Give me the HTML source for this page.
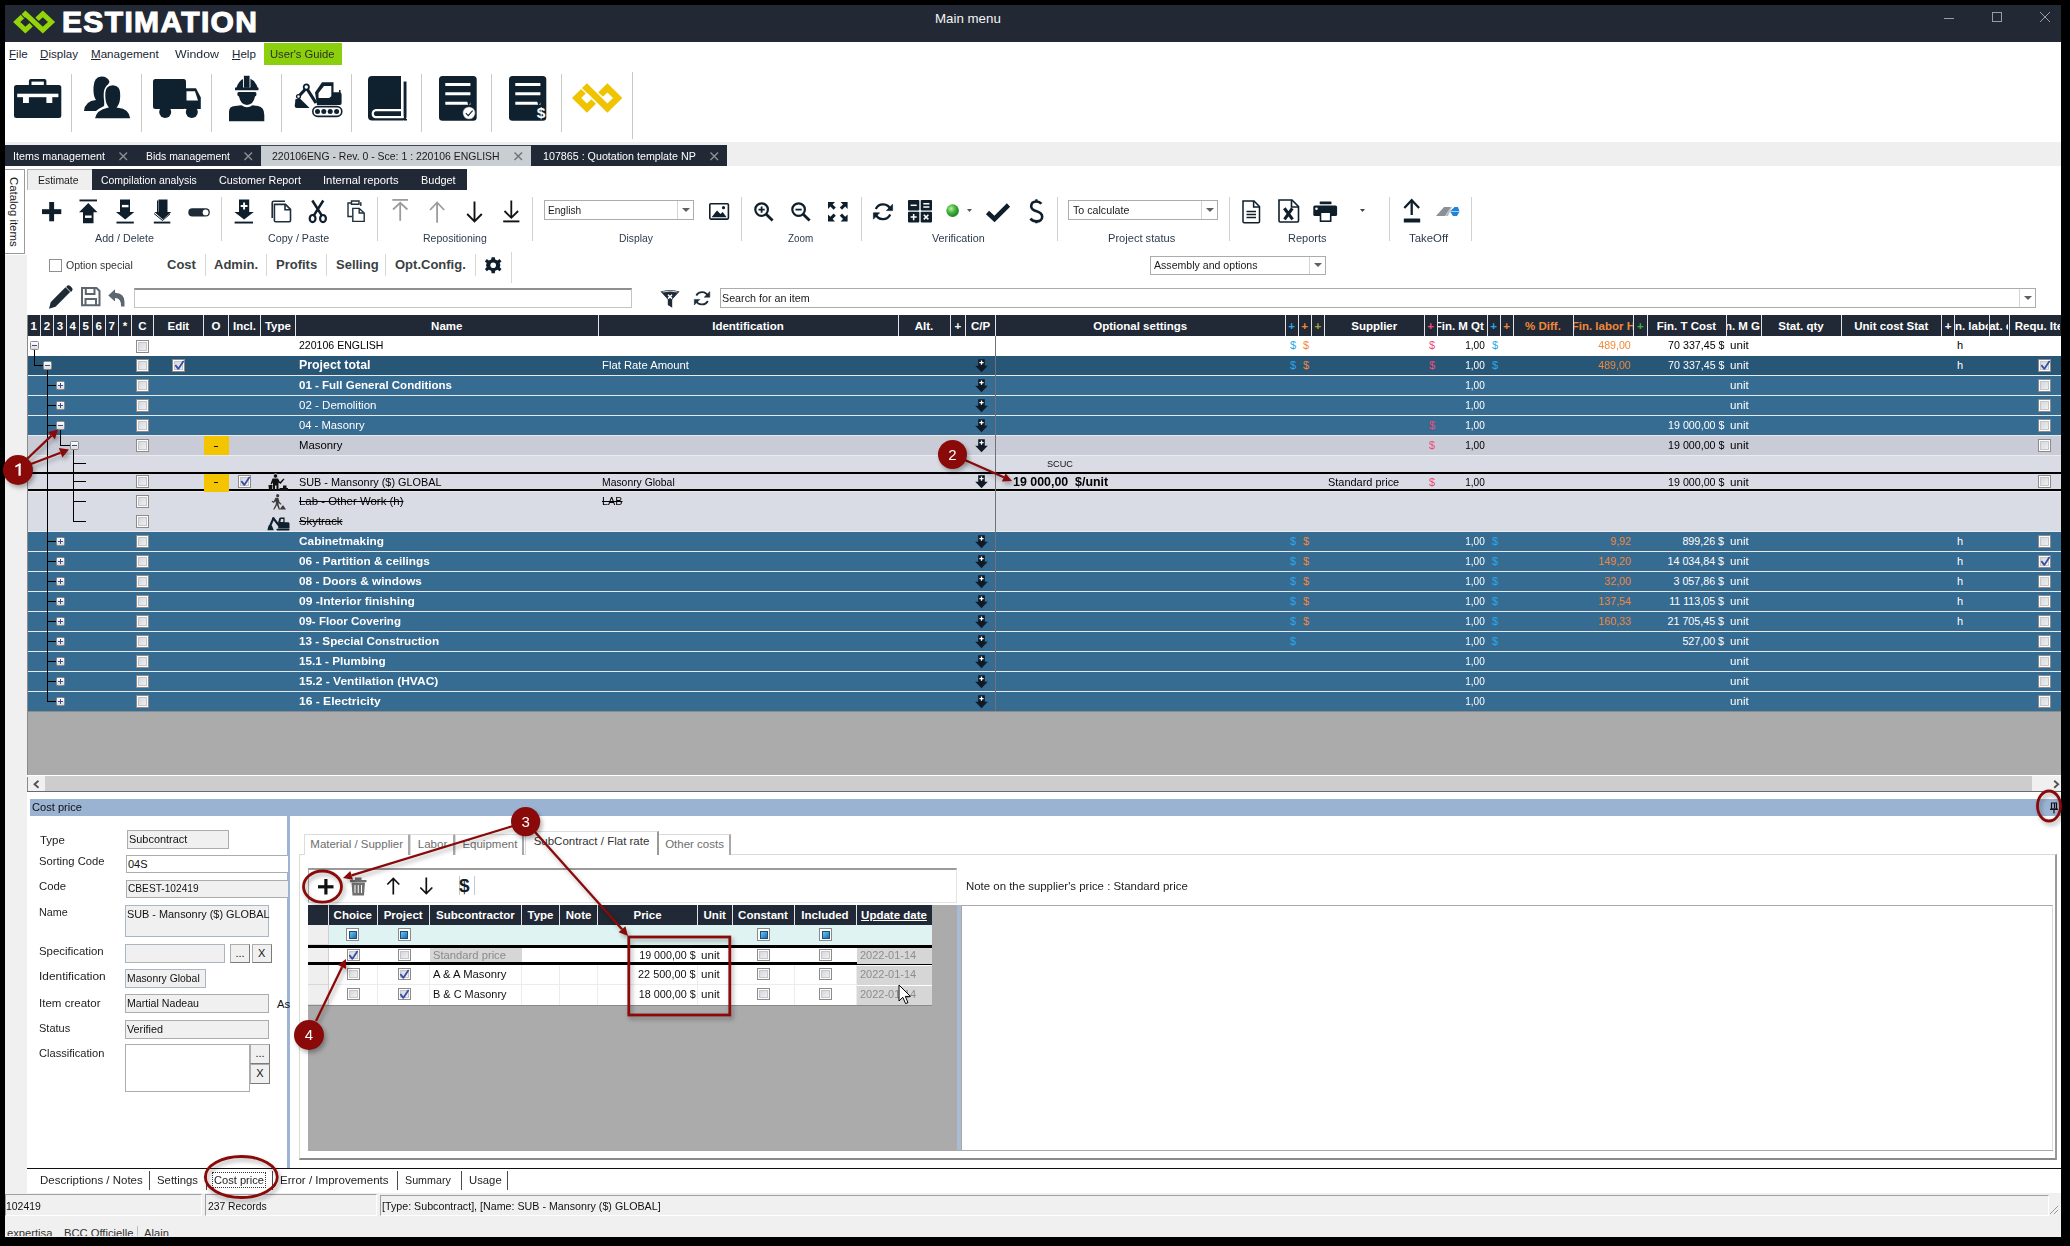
<!DOCTYPE html>
<html><head><meta charset="utf-8">
<style>
*{box-sizing:border-box;margin:0;padding:0}
html,body{width:2070px;height:1246px;overflow:hidden;background:#000;font-family:"Liberation Sans",sans-serif;}
.a{position:absolute}
.t{position:absolute;white-space:nowrap;font-size:10.7px;color:#000}
svg{position:absolute;overflow:visible}
.sep{position:absolute;width:1px;background:#c9c9c9}
.cb{position:absolute;width:13px;height:13px;border:1px solid #8e8a87;background:linear-gradient(135deg,#cdd1d8,#f6f6f6);box-shadow:inset 0 0 0 1px #fdfdfd,inset 0 0 0 2px #c3c6cb}
.ex{position:absolute;width:9px;height:9px;border:1px solid #8c8c8c;border-radius:1.5px;background:linear-gradient(#fdfdfd,#dcdcdc)}
</style></head><body>
<div class="a" style="left:5px;top:5px;width:2056px;height:1232px;background:#fff"></div>

<!-- TITLE BAR -->
<div class="a" style="left:5px;top:5px;width:2056px;height:37px;background:#222935"></div>
<svg style="left:0;top:0" width="70" height="42"><g fill="none" stroke="#94d40a" stroke-width="4.9" stroke-linejoin="miter" stroke-miterlimit="10"><polyline points="22.44,16.65 16.70,22.00 25.40,30.10 31.14,24.75"/><polyline points="23.22,15.93 25.40,13.90 42.80,30.10 51.50,22.00 42.80,13.90 37.06,19.25"/></g></svg>
<div class="t" style="left:62px;top:3px;font-size:30px;font-weight:bold;color:#fff;letter-spacing:1.35px;line-height:37px;-webkit-text-stroke:1.1px #fff">ESTIMATION</div>
<div class="t" style="left:935px;top:10.7px;font-size:13.3px;color:#f4f4f4;line-height:16px">Main menu</div>
<div class="a" style="left:1944px;top:18px;width:10px;height:1px;background:#9a9ea4"></div>
<div class="a" style="left:1992px;top:12px;width:10px;height:10px;border:1px solid #9a9ea4"></div>
<svg style="left:2040px;top:12px" width="11" height="11"><path d="M0,0L10,10M10,0L0,10" stroke="#9a9ea4" stroke-width="1"/></svg>

<!-- MENU BAR -->
<div class="a" style="left:264px;top:43px;width:78px;height:22px;background:#8ccf0c"></div>
<div class="t" style="left:9px;top:46px;font-size:11.6px;line-height:16px;color:#1b2633"><u>F</u>ile</div>
<div class="t" style="left:40px;top:46px;font-size:11.6px;line-height:16px;color:#1b2633"><u>D</u>isplay</div>
<div class="t" style="left:91px;top:46px;font-size:11.6px;line-height:16px;color:#1b2633"><u>M</u>anagement</div>
<div class="t" style="left:175px;top:46px;font-size:11.6px;line-height:16px;color:#1b2633;transform:scaleX(1.0665);transform-origin:left center">Window</div>
<div class="t" style="left:232px;top:46px;font-size:11.6px;line-height:16px;color:#1b2633"><u>H</u>elp</div>
<div class="t" style="left:270px;top:46px;font-size:11.6px;line-height:16px;color:#2b3320;transform:scaleX(0.9687);transform-origin:left center">User's Guide</div>

<!-- BIG TOOLBAR -->
<div class="sep" style="left:71px;top:74px;height:58px"></div>
<div class="sep" style="left:141px;top:74px;height:58px"></div>
<div class="sep" style="left:211px;top:74px;height:58px"></div>
<div class="sep" style="left:281px;top:74px;height:58px"></div>
<div class="sep" style="left:351px;top:74px;height:58px"></div>
<div class="sep" style="left:421px;top:74px;height:58px"></div>
<div class="sep" style="left:491px;top:74px;height:58px"></div>
<div class="sep" style="left:561px;top:74px;height:58px"></div>
<div class="sep" style="left:632px;top:72px;height:67px"></div>
<svg style="left:13.8px;top:79px" width="48" height="40" fill="#0f202e">
 <rect x="14.9" y="0" width="17.5" height="9" rx="2"/>
 <rect x="17.5" y="2.6" width="12.3" height="4" fill="#fff"/>
 <rect x="0" y="5.9" width="47.3" height="33" rx="2.5"/>
 <rect x="3.2" y="14.7" width="41.2" height="3.5" fill="#fff"/>
 <rect x="9" y="17.5" width="5.9" height="6.5" fill="#fff"/>
 <rect x="32.4" y="17.5" width="5.9" height="6.5" fill="#fff"/>
</svg>
<svg style="left:84px;top:76px" width="48" height="44" fill="#0f202e">
 <path d="M0,35 Q1,25 12,24 Q9,20 9.5,11 Q10,0.5 17.5,0.5 Q24,0.5 25.5,6 L22,12 L20,30 Q14,33 12,35 Z"/>
 <path d="M20.5,20 Q20,8.5 28.8,8.4 Q37.4,8.4 37,20 Q37,27 34,31 Q46,32 47.2,43 L10,43 Q12,33 23.5,31 Q20.5,27 20.5,20 Z" stroke="#fff" stroke-width="1.6"/>
</svg>
<svg style="left:153px;top:79px" width="48" height="40" fill="#0f202e">
 <rect x="0" y="0" width="33" height="30" rx="2.5"/>
 <path d="M32,9.2 H43 L47.8,18.5 V30 H32 Z"/>
 <path d="M33.5,12.3 H42 L45,21.4 H33.5 Z" fill="#fff"/>
 <circle cx="12.2" cy="33" r="6"/>
 <circle cx="38.8" cy="33" r="6"/>
</svg>
<svg style="left:229px;top:74.5px" width="36" height="47" fill="#0f202e">
 <path d="M7,14 Q9,6 15,3.5 L21,3.5 Q27,6 29,14 Z"/>
 <rect x="14.5" y="0.3" width="6.5" height="13" rx="1.2" stroke="#fff" stroke-width="0.9"/>
 <rect x="6" y="12.6" width="23.5" height="2.6" rx="0.5"/>
 <path d="M9.5,17 H26 Q27.5,17 27.5,19 Q27.5,21 26,21.5 Q24.5,29.5 18,30 Q11.5,29.5 10,21.5 Q8.3,21 8.3,19 Q8.3,17 9.5,17 Z"/>
 <path d="M0,46.3 V37 Q0,31 6,31 L12.5,30.3 Q18,34 23.5,30.3 L29,31 Q35.3,32 35.3,40 V46.3 Z"/>
</svg>
<svg style="left:293.5px;top:82px" width="48" height="35" fill="#0f202e">
 <rect x="18.8" y="24.6" width="29" height="9.8" rx="4.9" fill="none" stroke="#0f202e" stroke-width="1.6"/>
 <circle cx="23.5" cy="29.5" r="2.5"/><circle cx="29.8" cy="29.5" r="2.5"/><circle cx="36.2" cy="29.5" r="2.5"/><circle cx="42.6" cy="29.5" r="2.5"/>
 <path d="M21,10.5 L28,0.3 H39.5 V10.3 H46 Q47.6,10.5 47.6,12.5 V21 Q47.6,22.9 46,22.9 H23 Z"/>
 <path d="M24.5,11 L30,4 H37.3 V14.2 L35.2,16 H24.5 Z" fill="#fff"/>
 <rect x="45" y="8" width="1.5" height="3"/>
 <path d="M22,21 L12.5,6 L5,14" fill="none" stroke="#0f202e" stroke-width="3.2"/>
 <circle cx="12.3" cy="5" r="2.6" fill="#fff" stroke="#0f202e" stroke-width="1.8"/>
 <circle cx="4.5" cy="14.5" r="1.9" fill="#fff" stroke="#0f202e" stroke-width="1.4"/>
 <path d="M1.5,17 H6.5 L15.6,26 H3 Q0.7,26 0.7,24 Z"/>
</svg>
<svg style="left:367.7px;top:76px" width="39" height="45" fill="#0f202e">
 <rect x="0" y="0" width="38.5" height="44.4" rx="4"/>
 <rect x="33" y="-1" width="6" height="6.5" fill="#fff"/>
 <rect x="33" y="0" width="2.6" height="42" fill="#fff"/>
 <rect x="36" y="43" width="3" height="1.5"/>
 <path d="M33,34.2 H7.5 A3.6,3.6 0 0 0 7.5,41.2 H35.6" stroke="#fff" stroke-width="2.2" fill="none"/>
</svg>
<svg style="left:438.7px;top:76px" width="38" height="45" fill="#0f202e">
 <rect x="0" y="0" width="37.7" height="44.7" rx="3.5"/>
 <g stroke="#fff" stroke-width="2.9"><path d="M6.3,8.5H31.4M6.3,17.7H31.4M6.3,27.3H31.4"/></g>
 <path d="M28,25 L32.5,25 L29.5,30 Z"/>
 <circle cx="30" cy="37" r="6.3" fill="#fff" stroke="#0f202e" stroke-width="0.6"/>
 <path d="M26.8,37.2 L29.2,39.6 L33.6,34.6" stroke="#0f202e" stroke-width="1.1" fill="none"/>
</svg>
<svg style="left:508.8px;top:76px" width="38" height="45" fill="#0f202e">
 <rect x="0" y="0" width="37.3" height="44.7" rx="3.5"/>
 <g stroke="#fff" stroke-width="2.9"><path d="M6.3,8.5H31.4M6.3,17.7H31.4M6.3,27.3H31.4"/></g>
 <path d="M28,25 L32.5,25 L29.5,30 Z"/>
 <text x="27.8" y="41.5" font-family="Liberation Sans" font-weight="bold" font-size="15.5" fill="#fff">$</text>
</svg>
<svg style="left:572px;top:82.5px" width="50" height="31"><g fill="none" stroke="#f0c300" stroke-width="6.6" stroke-linejoin="miter" stroke-miterlimit="10"><polyline points="11.42,8.27 4.65,15.00 14.90,25.20 21.66,18.47"/><polyline points="12.34,7.35 14.90,4.80 35.40,25.20 45.65,15.00 35.40,4.80 28.63,11.53"/></g></svg>


<!-- DOC TABS -->
<div class="a" style="left:5px;top:142px;width:2056px;height:24px;background:#efefef"></div>
<div class="a" style="left:5px;top:145px;width:256px;height:21px;background:#212936"></div>
<div class="a" style="left:261px;top:145px;width:270px;height:21px;background:#c9ced3;border-top:1px solid #3c4654"></div>
<div class="a" style="left:531px;top:145px;width:196px;height:21px;background:#212936"></div>
<div class="t" style="left:13px;top:149px;line-height:14px;color:#fff;transform:scaleX(1.0045);transform-origin:left center">Items management</div>
<div class="t" style="left:146px;top:149px;line-height:14px;color:#fff;transform:scaleX(0.9740);transform-origin:left center">Bids management</div>
<div class="t" style="left:272px;top:149px;line-height:14px;font-size:10.55px;color:#1a1a1a;transform:scaleX(0.9914);transform-origin:left center">220106ENG - Rev. 0 - Sce: 1 : 220106 ENGLISH</div>
<div class="t" style="left:543px;top:149px;line-height:14px;color:#fff;transform:scaleX(1.0008);transform-origin:left center">107865 : Quotation template NP</div>
<svg style="left:119px;top:152px" width="9" height="9"><path d="M0.5,0.5L8,8M8,0.5L0.5,8" stroke="#8d9197" stroke-width="1.4"/></svg>
<svg style="left:244px;top:152px" width="9" height="9"><path d="M0.5,0.5L8,8M8,0.5L0.5,8" stroke="#8d9197" stroke-width="1.4"/></svg>
<svg style="left:514px;top:152px" width="9" height="9"><path d="M0.5,0.5L8,8M8,0.5L0.5,8" stroke="#6d7177" stroke-width="1.4"/></svg>
<svg style="left:710px;top:152px" width="9" height="9"><path d="M0.5,0.5L8,8M8,0.5L0.5,8" stroke="#8d9197" stroke-width="1.4"/></svg>

<!-- LEFT STRIP + ESTIMATE TABS -->
<div class="a" style="left:5px;top:255px;width:22px;height:940px;background:#f0f0f0"></div>
<div class="a" style="left:5px;top:169px;width:20px;height:85px;background:#fff;border:1px solid #9a9a9a;border-left:none"></div>
<div class="t" style="left:7px;top:176.5px;line-height:14px;font-size:11.4px;writing-mode:vertical-rl;color:#1a1a1a">Catalog items</div>
<div class="a" style="left:27px;top:169px;width:65px;height:21px;background:#efefef;border-top:1px solid #b4b4b4;border-left:1px solid #b4b4b4"></div>
<div class="a" style="left:92px;top:169px;width:375px;height:21px;background:#212936"></div>
<div class="t" style="left:38px;top:173px;line-height:14px;color:#1a1a1a;transform:scaleX(0.9754);transform-origin:left center">Estimate</div>
<div class="t" style="left:101px;top:173px;line-height:14px;color:#fff;transform:scaleX(0.9762);transform-origin:left center">Compilation analysis</div>
<div class="t" style="left:219px;top:173px;line-height:14px;color:#fff;transform:scaleX(1.0065);transform-origin:left center">Customer Report</div>
<div class="t" style="left:323px;top:173px;line-height:14px;color:#fff;transform:scaleX(1.0519);transform-origin:left center">Internal reports</div>
<div class="t" style="left:421px;top:173px;line-height:14px;color:#fff;transform:scaleX(1.0232);transform-origin:left center">Budget</div>
<!-- ESTIMATE TOOLBAR -->
<svg style="left:41.5px;top:201.5px" width="20" height="20" fill="#0f1e2b"><rect x="7.2" y="0" width="4.9" height="19.3"/><rect x="0" y="7.2" width="19.3" height="4.9"/></svg>
<svg style="left:79px;top:198.5px" width="19" height="25" fill="#0f1e2b"><rect x="0.5" y="0.5" width="17.5" height="1.9"/><path d="M9.25,4 L18.5,13.2 H14.5 V24.3 H4 V13.2 H0 Z"/><rect x="6" y="16.5" width="6.6" height="2.4" fill="#fff"/></svg>
<svg style="left:115.5px;top:198.5px" width="19" height="25" fill="#0f1e2b"><path d="M4,0.5 H14 V13 H18.3 L9.2,20.5 L0,13 H4 Z"/><rect x="0.5" y="22.6" width="17.3" height="1.9"/><rect x="5.9" y="5.9" width="6.6" height="2.4" fill="#fff"/></svg>
<svg style="left:152.5px;top:198.5px" width="19" height="25" fill="#0f1e2b"><path d="M5.5,0.5 H14.5 V13 H18.3 L9.8,20.5 L1.5,13 H5.5 Z"/><path d="M1,14.5 L9.5,21.5 L17,15" fill="none" stroke="#0f1e2b" stroke-width="1"/><rect x="4" y="1.5" width="1.2" height="12"/><rect x="0.8" y="22.6" width="16.5" height="1.9"/></svg>
<svg style="left:188px;top:207.5px" width="23" height="10"><rect x="0.3" y="0.3" width="21.5" height="8.2" rx="4.1" fill="#1e2a36"/><circle cx="17.6" cy="4.4" r="2.9" fill="#fff"/></svg>
<div class="sep" style="left:221px;top:197px;height:44px;background:#d0d0d0"></div>
<svg style="left:234px;top:198.5px" width="21" height="25" fill="#0f1e2b"><path d="M5,0.5 H15.2 V13 H19.8 L10.1,20.5 L0.4,13 H5 Z"/><rect x="0.6" y="22.6" width="18.4" height="1.9"/><path d="M10.1,3.6V10.4M6.7,7H13.5" stroke="#fff" stroke-width="1.9"/></svg>
<svg style="left:271px;top:200px" width="21" height="23" fill="none" stroke="#1e2e3a" stroke-width="1.6"><path d="M14,1.2 H2.8 Q1.2,1.2 1.2,2.8 V18"/><path d="M3.4,4.4 H14.5 L19.5,9.4 V20.6 Q19.5,21.8 18.3,21.8 H4.6 Q3.4,21.8 3.4,20.6 Z"/><path d="M14,4.6 V9.8 H19.3"/></svg>
<svg style="left:308px;top:200px" width="21" height="23" fill="none" stroke="#0f1e2b"><path d="M4.3,0.5 L14.2,16.2 M15.3,0.5 L5.4,16.2" stroke-width="2.5"/><ellipse cx="4.6" cy="18.6" rx="2.9" ry="3.6" stroke-width="2.2"/><ellipse cx="15" cy="18.6" rx="2.9" ry="3.6" stroke-width="2.2"/></svg>
<svg style="left:346.5px;top:200px" width="19" height="23" fill="none" stroke="#1e2e3a" stroke-width="1.4"><path d="M4,3 H1 V16.5 H5"/><path d="M4.5,1 H12 V4.2 H4.5 Z"/><path d="M13,3 H13.8 V6"/><path d="M5.8,8.4 H12.2 L17.2,13 V21.4 H5.8 Z"/><path d="M12.2,8.4 V13 H17"/></svg>
<div class="sep" style="left:377px;top:197px;height:44px;background:#d0d0d0"></div>
<svg style="left:391.5px;top:199px" width="17" height="23" fill="none" stroke="#9c9c9c" stroke-width="1.8"><path d="M0.3,0.9 H16"/><path d="M8.2,4 V21.8 M1,10.5 L8.2,3.8 L15.4,10.5"/></svg>
<svg style="left:429px;top:200.5px" width="17" height="23" fill="none" stroke="#9c9c9c" stroke-width="1.8"><path d="M8.1,1.5 V21.7 M1,9 L8.1,1.5 L15.2,9"/></svg>
<svg style="left:465.5px;top:200.5px" width="17" height="23" fill="none" stroke="#121212" stroke-width="1.9"><path d="M8.5,0.5 V20.8 M1.2,13 L8.5,20.5 L15.8,13"/></svg>
<svg style="left:502.5px;top:200px" width="17" height="23" fill="none" stroke="#121212" stroke-width="1.8"><path d="M8.3,0.5 V17.5 M1.5,11 L8.3,17.8 L15.1,11"/><path d="M0.2,21.4 H16.4" stroke-width="1.9"/></svg>
<div class="sep" style="left:532px;top:197px;height:44px;background:#d0d0d0"></div>
<!-- english dropdown -->
<div class="a" style="left:544px;top:200px;width:150px;height:20px;border:1px solid #acacac;background:#fff"></div>
<div class="a" style="left:677px;top:201px;width:1px;height:18px;background:#d4d4d4"></div>
<svg style="left:681.5px;top:207.5px" width="9" height="5"><path d="M0,0H8L4,4Z" fill="#606060"/></svg>
<div class="t" style="left:548px;top:203px;line-height:14px;color:#1a1a1a;transform:scaleX(0.9431);transform-origin:left center">English</div>
<svg style="left:708.5px;top:203px" width="21" height="17"><rect x="0.8" y="0.8" width="18.6" height="15.3" rx="1" fill="none" stroke="#0f1e2b" stroke-width="1.6"/><path d="M2.6,14.3 L8,7.5 L11.5,11 L13.7,9 L17.6,14.3 Z" fill="#0f1e2b"/><circle cx="14.5" cy="4.7" r="1.6" fill="#0f1e2b"/></svg>
<div class="sep" style="left:741px;top:197px;height:44px;background:#d0d0d0"></div>
<svg style="left:754px;top:202px" width="21" height="20" fill="none" stroke="#0f1e2b"><circle cx="7.6" cy="7.6" r="6.3" stroke-width="2.2"/><path d="M12.2,12.2 L18.6,18.6" stroke-width="2.8"/><path d="M7.6,4.5V10.7M4.5,7.6H10.7" stroke-width="1.8"/></svg>
<svg style="left:791px;top:202px" width="21" height="20" fill="none" stroke="#0f1e2b"><circle cx="7.6" cy="7.6" r="6.3" stroke-width="2.2"/><path d="M12.2,12.2 L18.6,18.6" stroke-width="2.8"/><path d="M4.5,7.6H10.7" stroke-width="1.8"/></svg>
<svg style="left:828px;top:202px" width="20" height="20" fill="#0f1e2b"><path d="M0,0H7L4.6,2.4L7.8,5.6L5.6,7.8L2.4,4.6L0,7Z"/><path d="M19.6,0H12.6L15,2.4L11.8,5.6L14,7.8L17.2,4.6L19.6,7Z"/><path d="M0,19.4H7L4.6,17L7.8,13.8L5.6,11.6L2.4,14.8L0,12.4Z"/><path d="M19.6,19.4H12.6L15,17L11.8,13.8L14,11.6L17.2,14.8L19.6,12.4Z"/></svg>
<div class="sep" style="left:860.5px;top:197px;height:44px;background:#d0d0d0"></div>
<svg style="left:873px;top:202px" width="21" height="20" fill="none" stroke="#0f1e2b" stroke-width="2.3"><path d="M17.5,7.5 A8,8 0 0 0 2.8,7"/><path d="M2.5,12 A8,8 0 0 0 17.2,12.5"/><path d="M19.6,2.2 V8.6 H13.4 Z" fill="#0f1e2b" stroke-width="0.6"/><path d="M0.4,17.2 V10.8 H6.6 Z" fill="#0f1e2b" stroke-width="0.6"/></svg>
<svg style="left:907.5px;top:200px" width="25" height="23" fill="#0f1e2b"><rect x="0" y="0" width="11.3" height="10.6" rx="0.8"/><rect x="12.7" y="0" width="11.3" height="10.6" rx="0.8"/><rect x="0" y="11.8" width="11.3" height="10.6" rx="0.8"/><rect x="12.7" y="11.8" width="11.3" height="10.6" rx="0.8"/><g stroke="#fff" stroke-width="1.5"><path d="M2.6,5.3H8.7"/><path d="M15.3,3.7H21.4M15.3,6.9H21.4"/><path d="M5.65,14V20.2M2.6,17.1H8.7"/><path d="M15.8,14.8L20.4,19.4M20.4,14.8L15.8,19.4"/></g></svg>
<svg style="left:946px;top:203.5px" width="15" height="15"><defs><radialGradient id="gd" cx="0.38" cy="0.35" r="0.7"><stop offset="0" stop-color="#b9f0a0"/><stop offset="0.5" stop-color="#3fb23a"/><stop offset="1" stop-color="#1f7a22"/></radialGradient></defs><circle cx="6.6" cy="6.6" r="6.3" fill="url(#gd)"/></svg>
<svg style="left:967px;top:209px" width="6" height="4"><path d="M0,0H5L2.5,3Z" fill="#555"/></svg>
<svg style="left:985.5px;top:202px" width="25" height="20"><path d="M1.5,10.5 L8.5,17 L22.5,3" fill="none" stroke="#0f1e2b" stroke-width="4.6"/></svg>
<svg style="left:1029px;top:198.5px" width="16" height="25" fill="none" stroke="#0f1e2b" stroke-width="2.6"><path d="M12.4,4.8 C11.2,3.3 9.4,2.5 7.4,2.5 C4.2,2.5 2.2,4.4 2.2,7.2 C2.2,10.4 5,11.5 7.6,12.3 C10.6,13.2 13.2,14.6 13.2,17.8 C13.2,20.6 10.8,22.4 7.6,22.4 C5.2,22.4 3,21.4 1.4,19.6"/><path d="M7.4,0.3V2.6M7.4,22.3V24.3" stroke-width="2.3"/></svg>
<div class="sep" style="left:1057px;top:197px;height:44px;background:#d0d0d0"></div>
<!-- to calculate -->
<div class="a" style="left:1068px;top:200px;width:150px;height:20px;border:1px solid #acacac;background:#fff"></div>
<div class="a" style="left:1201px;top:201px;width:1px;height:18px;background:#d4d4d4"></div>
<svg style="left:1205.5px;top:207.5px" width="9" height="5"><path d="M0,0H8L4,4Z" fill="#606060"/></svg>
<div class="t" style="left:1073px;top:203px;line-height:14px;color:#1a1a1a;transform:scaleX(0.9981);transform-origin:left center">To calculate</div>
<div class="sep" style="left:1228.5px;top:197px;height:44px;background:#d0d0d0"></div>
<svg style="left:1242px;top:199.5px" width="19" height="24" fill="none" stroke="#0f1e2b" stroke-width="1.5"><path d="M1,1 H12 L17.5,6.5 V21.5 Q17.5,22.8 16.2,22.8 H2.3 Q1,22.8 1,21.5 Z"/><path d="M11.6,1.2 V7 H17.3"/><path d="M4.5,11.5H14M4.5,14.5H14M4.5,17.5H14" stroke-width="1.3"/></svg>
<svg style="left:1277.5px;top:199px" width="22" height="24" fill="none" stroke="#0f1e2b" stroke-width="1.6"><path d="M1,1 H14 L20.5,7.5 V21.8 Q20.5,23 19.3,23 H2.2 Q1,23 1,21.8 Z"/><path d="M13.5,1.2 V8 H20.3"/><path d="M6.3,9.3 L14.6,20.4 M14.3,9.3 L6.5,20.4" stroke-width="3.1"/></svg>
<svg style="left:1312.5px;top:200.5px" width="26" height="22" fill="#0f1e2b"><rect x="6.7" y="0.4" width="11.8" height="2.8" rx="0.6"/><rect x="0.3" y="4.5" width="23.8" height="10.6" rx="1.6"/><circle cx="3.5" cy="7.7" r="1.3" fill="#fff"/><rect x="6.7" y="10.8" width="11.8" height="10.2" rx="0.6"/><rect x="8.3" y="12" width="8.6" height="7.4" fill="#fff"/></svg>
<svg style="left:1360px;top:209px" width="6" height="4"><path d="M0,0H5L2.5,3Z" fill="#444"/></svg>
<div class="sep" style="left:1388.5px;top:197px;height:44px;background:#d0d0d0"></div>
<svg style="left:1402.5px;top:199px" width="19" height="24" fill="#0f1e2b"><path d="M8.7,1V16" stroke="#0f1e2b" stroke-width="2.3"/><path d="M1.3,9 L8.7,1.2 L16.1,9" fill="none" stroke="#0f1e2b" stroke-width="2.3"/><rect x="0.8" y="19.6" width="16.4" height="3.8" rx="0.5"/></svg>
<svg style="left:1436px;top:205px" width="24" height="12"><path d="M0,11 L8,2 H15 L9,11 Z" fill="#8a9096"/><path d="M9,11 L15,2 H16 L12,11Z" fill="#b8bcc0"/><path d="M14,6.5 L18.5,2 H22 L23.5,6.5 L21,11 H17 Z" fill="#1f84d8"/><path d="M14,6.5 H23.5" stroke="#fff" stroke-width="0.6"/></svg>
<div class="sep" style="left:1470.5px;top:197px;height:44px;background:#d0d0d0"></div>
<!-- group labels -->
<div class="t" style="left:95px;top:231px;line-height:14px;color:#2c3b4c;transform:scaleX(1.0019);transform-origin:left center">Add / Delete</div>
<div class="t" style="left:268px;top:231px;line-height:14px;color:#2c3b4c;transform:scaleX(0.9990);transform-origin:left center">Copy / Paste</div>
<div class="t" style="left:422.5px;top:231px;line-height:14px;color:#2c3b4c;transform:scaleX(0.9855);transform-origin:left center">Repositioning</div>
<div class="t" style="left:619px;top:231px;line-height:14px;color:#2c3b4c;transform:scaleX(0.9662);transform-origin:left center">Display</div>
<div class="t" style="left:788px;top:231px;line-height:14px;color:#2c3b4c;transform:scaleX(0.9250);transform-origin:left center">Zoom</div>
<div class="t" style="left:932px;top:231px;line-height:14px;color:#2c3b4c;transform:scaleX(1.0068);transform-origin:left center">Verification</div>
<div class="t" style="left:1108px;top:231px;line-height:14px;color:#2c3b4c;transform:scaleX(1.0382);transform-origin:left center">Project status</div>
<div class="t" style="left:1288px;top:231px;line-height:14px;color:#2c3b4c;transform:scaleX(1.0302);transform-origin:left center">Reports</div>
<div class="t" style="left:1408.5px;top:231px;line-height:14px;color:#2c3b4c;transform:scaleX(1.0661);transform-origin:left center">TakeOff</div>
<!-- option row -->
<div class="a" style="left:49px;top:258.5px;width:13px;height:13px;border:1px solid #8f8f8f;background:#fff"></div>
<div class="t" style="left:65.5px;top:258px;line-height:14px;color:#333;transform:scaleX(0.9852);transform-origin:left center">Option special</div>
<div class="t" style="left:167px;top:257px;font-size:13px;font-weight:bold;line-height:16px;color:#3a3f44">Cost</div>
<div class="t" style="left:214px;top:257px;font-size:13px;font-weight:bold;line-height:16px;color:#3a3f44">Admin.</div>
<div class="t" style="left:276px;top:257px;font-size:13px;font-weight:bold;line-height:16px;color:#3a3f44">Profits</div>
<div class="t" style="left:336px;top:257px;font-size:13px;font-weight:bold;line-height:16px;color:#3a3f44">Selling</div>
<div class="t" style="left:395px;top:257px;font-size:13px;font-weight:bold;line-height:16px;color:#3a3f44">Opt.Config.</div>
<div class="sep" style="left:204.5px;top:254px;height:22px;background:#d6d6d6"></div>
<div class="sep" style="left:266px;top:254px;height:22px;background:#d6d6d6"></div>
<div class="sep" style="left:326px;top:254px;height:22px;background:#d6d6d6"></div>
<div class="sep" style="left:385px;top:254px;height:22px;background:#d6d6d6"></div>
<div class="sep" style="left:475px;top:254px;height:22px;background:#d6d6d6"></div>
<div class="sep" style="left:511px;top:252px;height:31px;background:#d6d6d6"></div>
<svg style="left:484.5px;top:256.5px" width="17" height="17"><g transform="translate(8.2,8.2)" fill="#0f1e2b"><path d="M-1.6,-8 H1.6 L2,-5.6 L4.4,-4.6 L6.4,-6.1 L8.3,-3.8 L6.5,-2.1 L7.2,0 L6.5,2.1 L8.3,3.8 L6.4,6.1 L4.4,4.6 L2,5.6 L1.6,8 H-1.6 L-2,5.6 L-4.4,4.6 L-6.4,6.1 L-8.3,3.8 L-6.5,2.1 L-7.2,0 L-6.5,-2.1 L-8.3,-3.8 L-6.4,-6.1 L-4.4,-4.6 L-2,-5.6 Z"/><circle r="2.8" fill="#fff"/></g></svg>
<div class="a" style="left:1150px;top:255.5px;width:176px;height:19.5px;border:1px solid #acacac;background:#fff"></div>
<div class="a" style="left:1309px;top:256.5px;width:1px;height:17.5px;background:#d4d4d4"></div>
<svg style="left:1313.5px;top:262.5px" width="9" height="5"><path d="M0,0H8L4,4Z" fill="#606060"/></svg>
<div class="t" style="left:1154px;top:258px;line-height:14px;color:#1a1a1a;transform:scaleX(0.9897);transform-origin:left center">Assembly and options</div>
<!-- pencil row -->
<svg style="left:49px;top:285px" width="25" height="24" fill="#1e2a36"><path d="M0,23.7 L1.8,17 L16.5,2.3 L21.2,7 L6.5,21.7 Z"/><path d="M17.8,1 Q19.5,-0.6 21.2,1 L22.9,2.7 Q24.5,4.3 22.9,6 L22,6.9 L17.3,2.2 Z"/></svg>
<svg style="left:80.5px;top:287px" width="20" height="20" fill="none" stroke="#5c6670" stroke-width="2"><path d="M1,1 H15.5 L18.5,4 V18.3 H1 Z"/><path d="M4.8,1.5 V7 H13.5 V1.5"/><path d="M4.5,18 V12 H15 V18"/></svg>
<svg style="left:108px;top:289px" width="17" height="18" fill="#5c6670"><path d="M0.3,6.5 L7,0.3 V3.8 Q16.5,4 16.5,13 V17.5 H13 Q13.5,9.2 7,9 V12.6 Z"/></svg>
<div class="a" style="left:134px;top:288px;width:498px;height:20px;border:1px solid #c4c4c4;border-top:2px solid #8f8f8f;background:#fff"></div>
<svg style="left:660px;top:289px" width="21" height="20" fill="#1e2a36"><path d="M0.5,2.5 Q10,-0.5 19.5,2.5 L12.2,10.5 V18.8 L7.8,16 V10.5 Z"/><path d="M2.6,3 Q10,1.2 17.4,3" stroke="#fff" stroke-width="0.8" fill="none"/><path d="M8,5.8 L12,9.6 M12,5.8 L8,9.6" stroke="#fff" stroke-width="1.5"/></svg>
<svg style="left:693.5px;top:290px" width="17" height="17" fill="none" stroke="#1e2a36" stroke-width="1.8"><path d="M14,6 A6.6,6.6 0 0 0 2.3,5.5"/><path d="M2,10.6 A6.6,6.6 0 0 0 13.8,11"/><path d="M15.8,1.6V7.2H10.2Z" fill="#1e2a36" stroke-width="0.5"/><path d="M0.3,15V9.4H5.9Z" fill="#1e2a36" stroke-width="0.5"/></svg>
<div class="a" style="left:720px;top:288px;width:1316px;height:20px;border:1px solid #acacac;background:#fff"></div>
<div class="a" style="left:2019px;top:289px;width:1px;height:18px;background:#d4d4d4"></div>
<svg style="left:2023.5px;top:295.5px" width="9" height="5"><path d="M0,0H8L4,4Z" fill="#606060"/></svg>
<div class="t" style="left:722px;top:291px;line-height:14px;color:#1a1a1a;transform:scaleX(1.0031);transform-origin:left center">Search for an item</div>
<div class="a" style="left:27px;top:315px;width:2034px;height:21px;background:#212936"></div>
<div class="a" style="left:27.0px;top:316px;width:13.6px;height:20px;overflow:hidden;text-align:center;font-size:11.5px;font-weight:bold;line-height:21px;color:#fff;white-space:nowrap">1</div>
<div class="a" style="left:40.1px;top:315px;width:1.2px;height:21px;background:#dfe2e6"></div>
<div class="a" style="left:40.6px;top:316px;width:12.8px;height:20px;overflow:hidden;text-align:center;font-size:11.5px;font-weight:bold;line-height:21px;color:#fff;white-space:nowrap">2</div>
<div class="a" style="left:52.9px;top:315px;width:1.2px;height:21px;background:#dfe2e6"></div>
<div class="a" style="left:53.4px;top:316px;width:12.9px;height:20px;overflow:hidden;text-align:center;font-size:11.5px;font-weight:bold;line-height:21px;color:#fff;white-space:nowrap">3</div>
<div class="a" style="left:65.8px;top:315px;width:1.2px;height:21px;background:#dfe2e6"></div>
<div class="a" style="left:66.3px;top:316px;width:12.8px;height:20px;overflow:hidden;text-align:center;font-size:11.5px;font-weight:bold;line-height:21px;color:#fff;white-space:nowrap">4</div>
<div class="a" style="left:78.6px;top:315px;width:1.2px;height:21px;background:#dfe2e6"></div>
<div class="a" style="left:79.1px;top:316px;width:13.1px;height:20px;overflow:hidden;text-align:center;font-size:11.5px;font-weight:bold;line-height:21px;color:#fff;white-space:nowrap">5</div>
<div class="a" style="left:91.7px;top:315px;width:1.2px;height:21px;background:#dfe2e6"></div>
<div class="a" style="left:92.2px;top:316px;width:13.0px;height:20px;overflow:hidden;text-align:center;font-size:11.5px;font-weight:bold;line-height:21px;color:#fff;white-space:nowrap">6</div>
<div class="a" style="left:104.7px;top:315px;width:1.2px;height:21px;background:#dfe2e6"></div>
<div class="a" style="left:105.2px;top:316px;width:13.1px;height:20px;overflow:hidden;text-align:center;font-size:11.5px;font-weight:bold;line-height:21px;color:#fff;white-space:nowrap">7</div>
<div class="a" style="left:117.8px;top:315px;width:1.2px;height:21px;background:#dfe2e6"></div>
<div class="a" style="left:118.3px;top:316px;width:13.2px;height:20px;overflow:hidden;text-align:center;font-size:11.5px;font-weight:bold;line-height:21px;color:#fff;white-space:nowrap">*</div>
<div class="a" style="left:131.0px;top:315px;width:1.2px;height:21px;background:#dfe2e6"></div>
<div class="a" style="left:131.5px;top:316px;width:21.7px;height:20px;overflow:hidden;text-align:center;font-size:11.5px;font-weight:bold;line-height:21px;color:#fff;white-space:nowrap">C</div>
<div class="a" style="left:152.7px;top:315px;width:1.2px;height:21px;background:#dfe2e6"></div>
<div class="a" style="left:153.2px;top:316px;width:50.3px;height:20px;overflow:hidden;text-align:center;font-size:11.5px;font-weight:bold;line-height:21px;color:#fff;white-space:nowrap">Edit</div>
<div class="a" style="left:203.0px;top:315px;width:1.2px;height:21px;background:#dfe2e6"></div>
<div class="a" style="left:203.5px;top:316px;width:25.1px;height:20px;overflow:hidden;text-align:center;font-size:11.5px;font-weight:bold;line-height:21px;color:#fff;white-space:nowrap">O</div>
<div class="a" style="left:228.1px;top:315px;width:1.2px;height:21px;background:#dfe2e6"></div>
<div class="a" style="left:228.6px;top:316px;width:31.8px;height:20px;overflow:hidden;text-align:center;font-size:11.5px;font-weight:bold;line-height:21px;color:#fff;white-space:nowrap">Incl.</div>
<div class="a" style="left:259.9px;top:315px;width:1.2px;height:21px;background:#dfe2e6"></div>
<div class="a" style="left:260.4px;top:316px;width:35.1px;height:20px;overflow:hidden;text-align:center;font-size:11.5px;font-weight:bold;line-height:21px;color:#fff;white-space:nowrap">Type</div>
<div class="a" style="left:295.0px;top:315px;width:1.2px;height:21px;background:#dfe2e6"></div>
<div class="a" style="left:295.5px;top:316px;width:302.5px;height:20px;overflow:hidden;text-align:center;font-size:11.5px;font-weight:bold;line-height:21px;color:#fff;white-space:nowrap">Name</div>
<div class="a" style="left:597.5px;top:315px;width:1.2px;height:21px;background:#dfe2e6"></div>
<div class="a" style="left:598.0px;top:316px;width:300.0px;height:20px;overflow:hidden;text-align:center;font-size:11.5px;font-weight:bold;line-height:21px;color:#fff;white-space:nowrap">Identification</div>
<div class="a" style="left:897.5px;top:315px;width:1.2px;height:21px;background:#dfe2e6"></div>
<div class="a" style="left:898.0px;top:316px;width:52.0px;height:20px;overflow:hidden;text-align:center;font-size:11.5px;font-weight:bold;line-height:21px;color:#fff;white-space:nowrap">Alt.</div>
<div class="a" style="left:949.5px;top:315px;width:1.2px;height:21px;background:#dfe2e6"></div>
<div class="a" style="left:950.0px;top:316px;width:15.5px;height:20px;overflow:hidden;text-align:center;font-size:11.5px;font-weight:bold;line-height:21px;color:#fff;white-space:nowrap">+</div>
<div class="a" style="left:965.0px;top:315px;width:1.2px;height:21px;background:#dfe2e6"></div>
<div class="a" style="left:965.5px;top:316px;width:30.0px;height:20px;overflow:hidden;text-align:center;font-size:11.5px;font-weight:bold;line-height:21px;color:#fff;white-space:nowrap">C/P</div>
<div class="a" style="left:995.0px;top:315px;width:1.2px;height:21px;background:#dfe2e6"></div>
<div class="a" style="left:995.5px;top:316px;width:289.5px;height:20px;overflow:hidden;text-align:center;font-size:11.5px;font-weight:bold;line-height:21px;color:#fff;white-space:nowrap">Optional settings</div>
<div class="a" style="left:1284.5px;top:315px;width:1.2px;height:21px;background:#dfe2e6"></div>
<div class="a" style="left:1285.0px;top:316px;width:13.0px;height:20px;overflow:hidden;text-align:center;font-size:11.5px;font-weight:bold;line-height:21px;color:#2aa7e8;white-space:nowrap">+</div>
<div class="a" style="left:1297.5px;top:315px;width:1.2px;height:21px;background:#dfe2e6"></div>
<div class="a" style="left:1298.0px;top:316px;width:13.0px;height:20px;overflow:hidden;text-align:center;font-size:11.5px;font-weight:bold;line-height:21px;color:#f0883a;white-space:nowrap">+</div>
<div class="a" style="left:1310.5px;top:315px;width:1.2px;height:21px;background:#dfe2e6"></div>
<div class="a" style="left:1311.0px;top:316px;width:13.5px;height:20px;overflow:hidden;text-align:center;font-size:11.5px;font-weight:bold;line-height:21px;color:#a8a030;white-space:nowrap">+</div>
<div class="a" style="left:1324.0px;top:315px;width:1.2px;height:21px;background:#dfe2e6"></div>
<div class="a" style="left:1324.5px;top:316px;width:99.5px;height:20px;overflow:hidden;text-align:center;font-size:11.5px;font-weight:bold;line-height:21px;color:#fff;white-space:nowrap">Supplier</div>
<div class="a" style="left:1423.5px;top:315px;width:1.2px;height:21px;background:#dfe2e6"></div>
<div class="a" style="left:1424.0px;top:316px;width:13.0px;height:20px;overflow:hidden;text-align:center;font-size:11.5px;font-weight:bold;line-height:21px;color:#f04a7a;white-space:nowrap">+</div>
<div class="a" style="left:1436.5px;top:315px;width:1.2px;height:21px;background:#dfe2e6"></div>
<div class="a" style="left:1437.7px;top:315px;width:48.8px;height:21px;overflow:hidden"><div class="t" style="left:-3px;top:4px;font-size:11.5px;font-weight:bold;line-height:15px;color:#fff">Fin. M Qt</div></div>
<div class="a" style="left:1486.5px;top:315px;width:1.2px;height:21px;background:#dfe2e6"></div>
<div class="a" style="left:1487.0px;top:316px;width:13.0px;height:20px;overflow:hidden;text-align:center;font-size:11.5px;font-weight:bold;line-height:21px;color:#2aa7e8;white-space:nowrap">+</div>
<div class="a" style="left:1499.5px;top:315px;width:1.2px;height:21px;background:#dfe2e6"></div>
<div class="a" style="left:1500.0px;top:316px;width:13.0px;height:20px;overflow:hidden;text-align:center;font-size:11.5px;font-weight:bold;line-height:21px;color:#f0883a;white-space:nowrap">+</div>
<div class="a" style="left:1512.5px;top:315px;width:1.2px;height:21px;background:#dfe2e6"></div>
<div class="a" style="left:1513.0px;top:316px;width:60.0px;height:20px;overflow:hidden;text-align:center;font-size:11.5px;font-weight:bold;line-height:21px;color:#f0883a;white-space:nowrap">% Diff.</div>
<div class="a" style="left:1572.5px;top:315px;width:1.2px;height:21px;background:#dfe2e6"></div>
<div class="a" style="left:1573.7px;top:315px;width:59.3px;height:21px;overflow:hidden"><div class="t" style="left:-2px;top:4px;font-size:11.5px;font-weight:bold;line-height:15px;color:#f0883a">Fin. labor H</div></div>
<div class="a" style="left:1633.0px;top:315px;width:1.2px;height:21px;background:#dfe2e6"></div>
<div class="a" style="left:1633.5px;top:316px;width:13.5px;height:20px;overflow:hidden;text-align:center;font-size:11.5px;font-weight:bold;line-height:21px;color:#3cb043;white-space:nowrap">+</div>
<div class="a" style="left:1646.5px;top:315px;width:1.2px;height:21px;background:#dfe2e6"></div>
<div class="a" style="left:1647.0px;top:316px;width:79.0px;height:20px;overflow:hidden;text-align:center;font-size:11.5px;font-weight:bold;line-height:21px;color:#fff;white-space:nowrap">Fin. T Cost</div>
<div class="a" style="left:1725.5px;top:315px;width:1.2px;height:21px;background:#dfe2e6"></div>
<div class="a" style="left:1726.7px;top:315px;width:33.8px;height:21px;overflow:hidden"><div class="t" style="left:-12px;top:4px;font-size:11.5px;font-weight:bold;line-height:15px;color:#fff">Fin. M G</div></div>
<div class="a" style="left:1760.5px;top:315px;width:1.2px;height:21px;background:#dfe2e6"></div>
<div class="a" style="left:1761.0px;top:316px;width:80.0px;height:20px;overflow:hidden;text-align:center;font-size:11.5px;font-weight:bold;line-height:21px;color:#fff;white-space:nowrap">Stat. qty</div>
<div class="a" style="left:1840.5px;top:315px;width:1.2px;height:21px;background:#dfe2e6"></div>
<div class="a" style="left:1841.0px;top:316px;width:100.5px;height:20px;overflow:hidden;text-align:center;font-size:11.5px;font-weight:bold;line-height:21px;color:#fff;white-space:nowrap">Unit cost Stat</div>
<div class="a" style="left:1941.0px;top:315px;width:1.2px;height:21px;background:#dfe2e6"></div>
<div class="a" style="left:1941.5px;top:316px;width:13.0px;height:20px;overflow:hidden;text-align:center;font-size:11.5px;font-weight:bold;line-height:21px;color:#fff;white-space:nowrap">+</div>
<div class="a" style="left:1954.0px;top:315px;width:1.2px;height:21px;background:#dfe2e6"></div>
<div class="a" style="left:1955.2px;top:315px;width:33.3px;height:21px;overflow:hidden"><div class="t" style="left:-10.5px;top:4px;font-size:11.5px;font-weight:bold;line-height:15px;color:#fff">Fin. labor</div></div>
<div class="a" style="left:1988.5px;top:315px;width:1.2px;height:21px;background:#dfe2e6"></div>
<div class="a" style="left:1989.7px;top:315px;width:18.8px;height:21px;overflow:hidden"><div class="t" style="left:-12px;top:4px;font-size:11.5px;font-weight:bold;line-height:15px;color:#fff">Stat. c</div></div>
<div class="a" style="left:2008.5px;top:315px;width:1.2px;height:21px;background:#dfe2e6"></div>
<div class="a" style="left:2009.7px;top:315px;width:50.8px;height:21px;overflow:hidden"><div class="t" style="left:5px;top:4px;font-size:11.5px;font-weight:bold;line-height:15px;color:#fff">Requ. Item</div></div>
<div class="a" style="left:27px;top:336px;width:2034px;height:376px;background:#e9ecef"></div>
<div class="a" style="left:28px;top:336px;width:2033px;height:20px;background:#fff"></div>
<div class="a" style="left:28px;top:356px;width:2033px;height:19px;background:#285677"></div>
<div class="a" style="left:28px;top:376px;width:2033px;height:19px;background:#366b92"></div>
<div class="a" style="left:28px;top:396px;width:2033px;height:19px;background:#366b92"></div>
<div class="a" style="left:28px;top:416px;width:2033px;height:19px;background:#366b92"></div>
<div class="a" style="left:28px;top:436px;width:2033px;height:19px;background:#c9cbd7"></div>
<div class="a" style="left:28px;top:456px;width:2033px;height:16px;background:#d9dce5"></div>
<div class="a" style="left:28px;top:474px;width:2033px;height:15px;background:#d9dce5"></div>
<div class="a" style="left:28px;top:491.5px;width:2033px;height:20px;background:#d9dce5"></div>
<div class="a" style="left:28px;top:512px;width:2033px;height:19px;background:#d9dce5"></div>
<div class="a" style="left:28px;top:532px;width:2033px;height:19px;background:#366b92"></div>
<div class="a" style="left:28px;top:552px;width:2033px;height:19px;background:#366b92"></div>
<div class="a" style="left:28px;top:572px;width:2033px;height:19px;background:#366b92"></div>
<div class="a" style="left:28px;top:592px;width:2033px;height:19px;background:#366b92"></div>
<div class="a" style="left:28px;top:612px;width:2033px;height:19px;background:#366b92"></div>
<div class="a" style="left:28px;top:632px;width:2033px;height:19px;background:#366b92"></div>
<div class="a" style="left:28px;top:652px;width:2033px;height:19px;background:#366b92"></div>
<div class="a" style="left:28px;top:672px;width:2033px;height:19px;background:#366b92"></div>
<div class="a" style="left:28px;top:692px;width:2033px;height:19px;background:#366b92"></div>
<div class="a" style="left:28px;top:472px;width:2033px;height:2px;background:#000"></div>
<div class="a" style="left:28px;top:489px;width:2033px;height:2px;background:#000"></div>
<div class="a" style="left:28px;top:711px;width:2033px;height:1.5px;background:#8c8c8c"></div>
<div class="a" style="left:28px;top:712px;width:2033px;height:63px;background:#ababab"></div>
<div class="a" style="left:27px;top:315px;width:1px;height:476px;background:#8a8a8a"></div>
<div class="a" style="left:995px;top:336px;width:1px;height:375px;background:#6f7378"></div>
<div class="cb" style="left:136px;top:340px"></div>
<div class="t" style="left:299px;top:335px;font-size:11px;line-height:20px;color:#000;transform:scaleX(0.9596);transform-origin:left center">220106 ENGLISH</div>
<div class="t" style="left:1290px;top:335px;font-size:11px;line-height:20px;color:#2aa7e8">$</div>
<div class="t" style="left:1303px;top:335px;font-size:11px;line-height:20px;color:#f0883a">$</div>
<div class="t" style="left:1429px;top:335px;font-size:11px;line-height:20px;color:#f04a7a">$</div>
<div class="t" style="right:585px;top:335px;font-size:10.7px;line-height:20px;color:#000;transform:scaleX(0.9411);transform-origin:right center">1,00</div>
<div class="t" style="left:1492px;top:335px;font-size:11px;line-height:20px;color:#2aa7e8">$</div>
<div class="t" style="right:439px;top:335px;font-size:10.7px;line-height:20px;color:#f0883a;transform:scaleX(0.9930);transform-origin:right center">489,00</div>
<div class="t" style="right:346px;top:335px;font-size:10.7px;line-height:20px;color:#000;transform:scaleX(0.9978);transform-origin:right center">70 337,45 $</div>
<div class="t" style="left:1730px;top:335px;font-size:11px;line-height:20px;color:#000;transform:scaleX(1.0544);transform-origin:left center">unit</div>
<div class="t" style="left:1957px;top:335px;font-size:11px;line-height:20px;color:#000">h</div>
<div class="cb" style="left:136px;top:359px"></div>
<div class="cb" style="left:172px;top:359px"></div><svg style="left:173.5px;top:360px" width="11" height="11"><path d="M1.8,5.6 L4.3,8.9 L9.2,1.6" fill="none" stroke="#3a4ea8" stroke-width="1.8" stroke-linecap="round" stroke-linejoin="round"/></svg>
<div class="t" style="left:299px;top:354.5px;font-size:12.3px;font-weight:bold;line-height:20px;color:#fff;transform:scaleX(1.0059);transform-origin:left center">Project total</div>
<div class="t" style="left:602px;top:355px;font-size:11px;line-height:20px;color:#fff;transform:scaleX(1.0237);transform-origin:left center">Flat Rate Amount</div>
<svg style="left:974.5px;top:358.7px" width="13" height="14"><path d="M3.2,0.3 H9.8 V6.8 H12.8 L6.5,13.2 L0.2,6.8 H3.2 Z" fill="#0f1a26"/><path d="M6.5,1.6 V5.8 M4.4,3.7 H8.6" stroke="#fff" stroke-width="1.3"/></svg>
<div class="t" style="left:1290px;top:355px;font-size:11px;line-height:20px;color:#2aa7e8">$</div>
<div class="t" style="left:1303px;top:355px;font-size:11px;line-height:20px;color:#f0883a">$</div>
<div class="t" style="left:1429px;top:355px;font-size:11px;line-height:20px;color:#f04a7a">$</div>
<div class="t" style="right:585px;top:355px;font-size:10.7px;line-height:20px;color:#fff;transform:scaleX(0.9411);transform-origin:right center">1,00</div>
<div class="t" style="left:1492px;top:355px;font-size:11px;line-height:20px;color:#2aa7e8">$</div>
<div class="t" style="right:439px;top:355px;font-size:10.7px;line-height:20px;color:#f0883a;transform:scaleX(0.9930);transform-origin:right center">489,00</div>
<div class="t" style="right:346px;top:355px;font-size:10.7px;line-height:20px;color:#fff;transform:scaleX(0.9978);transform-origin:right center">70 337,45 $</div>
<div class="t" style="left:1730px;top:355px;font-size:11px;line-height:20px;color:#fff;transform:scaleX(1.0544);transform-origin:left center">unit</div>
<div class="t" style="left:1957px;top:355px;font-size:11px;line-height:20px;color:#fff">h</div>
<div class="cb" style="left:2038px;top:359px"></div><svg style="left:2039.5px;top:360px" width="11" height="11"><path d="M1.8,5.6 L4.3,8.9 L9.2,1.6" fill="none" stroke="#3a4ea8" stroke-width="1.8" stroke-linecap="round" stroke-linejoin="round"/></svg>
<div class="cb" style="left:136px;top:379px"></div>
<div class="t" style="left:299px;top:375px;font-size:11.6px;font-weight:bold;line-height:20px;color:#fff;transform:scaleX(0.9932);transform-origin:left center">01 - Full General Conditions</div>
<svg style="left:974.5px;top:378.7px" width="13" height="14"><path d="M3.2,0.3 H9.8 V6.8 H12.8 L6.5,13.2 L0.2,6.8 H3.2 Z" fill="#0f1a26"/><path d="M6.5,1.6 V5.8 M4.4,3.7 H8.6" stroke="#fff" stroke-width="1.3"/></svg>
<div class="t" style="right:585px;top:375px;font-size:10.7px;line-height:20px;color:#fff;transform:scaleX(0.9411);transform-origin:right center">1,00</div>
<div class="t" style="left:1730px;top:375px;font-size:11px;line-height:20px;color:#fff;transform:scaleX(1.0544);transform-origin:left center">unit</div>
<div class="cb" style="left:2038px;top:379px"></div>
<div class="cb" style="left:136px;top:399px"></div>
<div class="t" style="left:299px;top:395px;font-size:11px;line-height:20px;color:#fff;transform:scaleX(1.0476);transform-origin:left center">02 - Demolition</div>
<svg style="left:974.5px;top:398.7px" width="13" height="14"><path d="M3.2,0.3 H9.8 V6.8 H12.8 L6.5,13.2 L0.2,6.8 H3.2 Z" fill="#0f1a26"/><path d="M6.5,1.6 V5.8 M4.4,3.7 H8.6" stroke="#fff" stroke-width="1.3"/></svg>
<div class="t" style="right:585px;top:395px;font-size:10.7px;line-height:20px;color:#fff;transform:scaleX(0.9411);transform-origin:right center">1,00</div>
<div class="t" style="left:1730px;top:395px;font-size:11px;line-height:20px;color:#fff;transform:scaleX(1.0544);transform-origin:left center">unit</div>
<div class="cb" style="left:2038px;top:399px"></div>
<div class="cb" style="left:136px;top:419px"></div>
<div class="t" style="left:299px;top:415px;font-size:11px;line-height:20px;color:#fff;transform:scaleX(1.0204);transform-origin:left center">04 - Masonry</div>
<svg style="left:974.5px;top:418.7px" width="13" height="14"><path d="M3.2,0.3 H9.8 V6.8 H12.8 L6.5,13.2 L0.2,6.8 H3.2 Z" fill="#0f1a26"/><path d="M6.5,1.6 V5.8 M4.4,3.7 H8.6" stroke="#fff" stroke-width="1.3"/></svg>
<div class="t" style="left:1429px;top:415px;font-size:11px;line-height:20px;color:#f04a7a">$</div>
<div class="t" style="right:585px;top:415px;font-size:10.7px;line-height:20px;color:#fff;transform:scaleX(0.9411);transform-origin:right center">1,00</div>
<div class="t" style="right:346px;top:415px;font-size:10.7px;line-height:20px;color:#fff;transform:scaleX(0.9995);transform-origin:right center">19 000,00 $</div>
<div class="t" style="left:1730px;top:415px;font-size:11px;line-height:20px;color:#fff;transform:scaleX(1.0544);transform-origin:left center">unit</div>
<div class="cb" style="left:2038px;top:419px"></div>
<div class="cb" style="left:136px;top:439px"></div>
<div class="a" style="left:204px;top:436px;width:25px;height:19px;background:#f2c500"></div>
<div class="a" style="left:214px;top:446px;width:4px;height:1.4px;background:#111"></div>
<div class="t" style="left:299px;top:435px;font-size:11px;line-height:20px;color:#000;transform:scaleX(1.0313);transform-origin:left center">Masonry</div>
<svg style="left:974.5px;top:438.7px" width="13" height="14"><path d="M3.2,0.3 H9.8 V6.8 H12.8 L6.5,13.2 L0.2,6.8 H3.2 Z" fill="#0f1a26"/><path d="M6.5,1.6 V5.8 M4.4,3.7 H8.6" stroke="#fff" stroke-width="1.3"/></svg>
<div class="t" style="left:1429px;top:435px;font-size:11px;line-height:20px;color:#f04a7a">$</div>
<div class="t" style="right:585px;top:435px;font-size:10.7px;line-height:20px;color:#000;transform:scaleX(0.9411);transform-origin:right center">1,00</div>
<div class="t" style="right:346px;top:435px;font-size:10.7px;line-height:20px;color:#000;transform:scaleX(0.9995);transform-origin:right center">19 000,00 $</div>
<div class="t" style="left:1730px;top:435px;font-size:11px;line-height:20px;color:#000;transform:scaleX(1.0544);transform-origin:left center">unit</div>
<div class="cb" style="left:2038px;top:439px"></div>
<div class="cb" style="left:136px;top:475px"></div>
<div class="a" style="left:204px;top:474px;width:25px;height:18px;background:#f2c500"></div>
<div class="a" style="left:214px;top:482px;width:4px;height:1.4px;background:#111"></div>
<div class="cb" style="left:238px;top:475px"></div><svg style="left:239.5px;top:476px" width="11" height="11"><path d="M1.8,5.6 L4.3,8.9 L9.2,1.6" fill="none" stroke="#3a4ea8" stroke-width="1.8" stroke-linecap="round" stroke-linejoin="round"/></svg>
<div class="t" style="left:299px;top:471.5px;font-size:11px;line-height:20px;color:#000;transform:scaleX(0.9877);transform-origin:left center">SUB - Mansonry ($) GLOBAL</div>
<div class="t" style="left:602px;top:471.5px;font-size:11px;line-height:20px;color:#000;transform:scaleX(0.9437);transform-origin:left center">Masonry Global</div>
<svg style="left:974.5px;top:474.7px" width="13" height="14"><path d="M3.2,0.3 H9.8 V6.8 H12.8 L6.5,13.2 L0.2,6.8 H3.2 Z" fill="#0f1a26"/><path d="M6.5,1.6 V5.8 M4.4,3.7 H8.6" stroke="#fff" stroke-width="1.3"/></svg>
<div class="t" style="left:1429px;top:471.5px;font-size:11px;line-height:20px;color:#f04a7a">$</div>
<div class="t" style="right:585px;top:471.5px;font-size:10.7px;line-height:20px;color:#000;transform:scaleX(0.9411);transform-origin:right center">1,00</div>
<div class="t" style="right:346px;top:471.5px;font-size:10.7px;line-height:20px;color:#000;transform:scaleX(0.9995);transform-origin:right center">19 000,00 $</div>
<div class="t" style="left:1730px;top:471.5px;font-size:11px;line-height:20px;color:#000;transform:scaleX(1.0544);transform-origin:left center">unit</div>
<div class="cb" style="left:2038px;top:475px"></div>
<div class="cb" style="left:136px;top:495px"></div>
<div class="t" style="left:299px;top:490.5px;font-size:11px;text-decoration:line-through;line-height:20px;color:#000;transform:scaleX(1.0381);transform-origin:left center">Lab - Other Work (h)</div>
<div class="t" style="left:602px;top:490.5px;font-size:11px;text-decoration:line-through;line-height:20px;color:#000;transform:scaleX(0.9859);transform-origin:left center">LAB</div>
<div class="cb" style="left:136px;top:515px"></div>
<div class="t" style="left:299px;top:511px;font-size:11px;text-decoration:line-through;line-height:20px;color:#000;transform:scaleX(1.0314);transform-origin:left center">Skytrack</div>
<div class="cb" style="left:136px;top:535px"></div>
<div class="t" style="left:299px;top:531px;font-size:11.6px;font-weight:bold;line-height:20px;color:#fff;transform:scaleX(1.0222);transform-origin:left center">Cabinetmaking</div>
<svg style="left:974.5px;top:534.7px" width="13" height="14"><path d="M3.2,0.3 H9.8 V6.8 H12.8 L6.5,13.2 L0.2,6.8 H3.2 Z" fill="#0f1a26"/><path d="M6.5,1.6 V5.8 M4.4,3.7 H8.6" stroke="#fff" stroke-width="1.3"/></svg>
<div class="t" style="left:1290px;top:531px;font-size:11px;line-height:20px;color:#2aa7e8">$</div>
<div class="t" style="left:1303px;top:531px;font-size:11px;line-height:20px;color:#f0883a">$</div>
<div class="t" style="right:585px;top:531px;font-size:10.7px;line-height:20px;color:#fff;transform:scaleX(0.9411);transform-origin:right center">1,00</div>
<div class="t" style="left:1492px;top:531px;font-size:11px;line-height:20px;color:#2aa7e8">$</div>
<div class="t" style="right:439px;top:531px;font-size:10.7px;line-height:20px;color:#f0883a">9,92</div>
<div class="t" style="right:346px;top:531px;font-size:10.7px;line-height:20px;color:#fff">899,26 $</div>
<div class="t" style="left:1730px;top:531px;font-size:11px;line-height:20px;color:#fff;transform:scaleX(1.0544);transform-origin:left center">unit</div>
<div class="t" style="left:1957px;top:531px;font-size:11px;line-height:20px;color:#fff">h</div>
<div class="cb" style="left:2038px;top:535px"></div>
<div class="cb" style="left:136px;top:555px"></div>
<div class="t" style="left:299px;top:551px;font-size:11.6px;font-weight:bold;line-height:20px;color:#fff;transform:scaleX(1.0212);transform-origin:left center">06 - Partition &amp; ceilings</div>
<svg style="left:974.5px;top:554.7px" width="13" height="14"><path d="M3.2,0.3 H9.8 V6.8 H12.8 L6.5,13.2 L0.2,6.8 H3.2 Z" fill="#0f1a26"/><path d="M6.5,1.6 V5.8 M4.4,3.7 H8.6" stroke="#fff" stroke-width="1.3"/></svg>
<div class="t" style="left:1290px;top:551px;font-size:11px;line-height:20px;color:#2aa7e8">$</div>
<div class="t" style="left:1303px;top:551px;font-size:11px;line-height:20px;color:#f0883a">$</div>
<div class="t" style="right:585px;top:551px;font-size:10.7px;line-height:20px;color:#fff;transform:scaleX(0.9411);transform-origin:right center">1,00</div>
<div class="t" style="left:1492px;top:551px;font-size:11px;line-height:20px;color:#2aa7e8">$</div>
<div class="t" style="right:439px;top:551px;font-size:10.7px;line-height:20px;color:#f0883a">149,20</div>
<div class="t" style="right:346px;top:551px;font-size:10.7px;line-height:20px;color:#fff">14 034,84 $</div>
<div class="t" style="left:1730px;top:551px;font-size:11px;line-height:20px;color:#fff;transform:scaleX(1.0544);transform-origin:left center">unit</div>
<div class="t" style="left:1957px;top:551px;font-size:11px;line-height:20px;color:#fff">h</div>
<div class="cb" style="left:2038px;top:555px"></div><svg style="left:2039.5px;top:556px" width="11" height="11"><path d="M1.8,5.6 L4.3,8.9 L9.2,1.6" fill="none" stroke="#3a4ea8" stroke-width="1.8" stroke-linecap="round" stroke-linejoin="round"/></svg>
<div class="cb" style="left:136px;top:575px"></div>
<div class="t" style="left:299px;top:571px;font-size:11.6px;font-weight:bold;line-height:20px;color:#fff;transform:scaleX(1.0205);transform-origin:left center">08 - Doors &amp; windows</div>
<svg style="left:974.5px;top:574.7px" width="13" height="14"><path d="M3.2,0.3 H9.8 V6.8 H12.8 L6.5,13.2 L0.2,6.8 H3.2 Z" fill="#0f1a26"/><path d="M6.5,1.6 V5.8 M4.4,3.7 H8.6" stroke="#fff" stroke-width="1.3"/></svg>
<div class="t" style="left:1290px;top:571px;font-size:11px;line-height:20px;color:#2aa7e8">$</div>
<div class="t" style="left:1303px;top:571px;font-size:11px;line-height:20px;color:#f0883a">$</div>
<div class="t" style="right:585px;top:571px;font-size:10.7px;line-height:20px;color:#fff;transform:scaleX(0.9411);transform-origin:right center">1,00</div>
<div class="t" style="left:1492px;top:571px;font-size:11px;line-height:20px;color:#2aa7e8">$</div>
<div class="t" style="right:439px;top:571px;font-size:10.7px;line-height:20px;color:#f0883a">32,00</div>
<div class="t" style="right:346px;top:571px;font-size:10.7px;line-height:20px;color:#fff">3 057,86 $</div>
<div class="t" style="left:1730px;top:571px;font-size:11px;line-height:20px;color:#fff;transform:scaleX(1.0544);transform-origin:left center">unit</div>
<div class="t" style="left:1957px;top:571px;font-size:11px;line-height:20px;color:#fff">h</div>
<div class="cb" style="left:2038px;top:575px"></div>
<div class="cb" style="left:136px;top:595px"></div>
<div class="t" style="left:299px;top:591px;font-size:11.6px;font-weight:bold;line-height:20px;color:#fff;transform:scaleX(1.0404);transform-origin:left center">09 -Interior finishing</div>
<svg style="left:974.5px;top:594.7px" width="13" height="14"><path d="M3.2,0.3 H9.8 V6.8 H12.8 L6.5,13.2 L0.2,6.8 H3.2 Z" fill="#0f1a26"/><path d="M6.5,1.6 V5.8 M4.4,3.7 H8.6" stroke="#fff" stroke-width="1.3"/></svg>
<div class="t" style="left:1290px;top:591px;font-size:11px;line-height:20px;color:#2aa7e8">$</div>
<div class="t" style="left:1303px;top:591px;font-size:11px;line-height:20px;color:#f0883a">$</div>
<div class="t" style="right:585px;top:591px;font-size:10.7px;line-height:20px;color:#fff;transform:scaleX(0.9411);transform-origin:right center">1,00</div>
<div class="t" style="left:1492px;top:591px;font-size:11px;line-height:20px;color:#2aa7e8">$</div>
<div class="t" style="right:439px;top:591px;font-size:10.7px;line-height:20px;color:#f0883a">137,54</div>
<div class="t" style="right:346px;top:591px;font-size:10.7px;line-height:20px;color:#fff">11 113,05 $</div>
<div class="t" style="left:1730px;top:591px;font-size:11px;line-height:20px;color:#fff;transform:scaleX(1.0544);transform-origin:left center">unit</div>
<div class="t" style="left:1957px;top:591px;font-size:11px;line-height:20px;color:#fff">h</div>
<div class="cb" style="left:2038px;top:595px"></div>
<div class="cb" style="left:136px;top:615px"></div>
<div class="t" style="left:299px;top:611px;font-size:11.6px;font-weight:bold;line-height:20px;color:#fff;transform:scaleX(0.9953);transform-origin:left center">09- Floor Covering</div>
<svg style="left:974.5px;top:614.7px" width="13" height="14"><path d="M3.2,0.3 H9.8 V6.8 H12.8 L6.5,13.2 L0.2,6.8 H3.2 Z" fill="#0f1a26"/><path d="M6.5,1.6 V5.8 M4.4,3.7 H8.6" stroke="#fff" stroke-width="1.3"/></svg>
<div class="t" style="left:1290px;top:611px;font-size:11px;line-height:20px;color:#2aa7e8">$</div>
<div class="t" style="left:1303px;top:611px;font-size:11px;line-height:20px;color:#f0883a">$</div>
<div class="t" style="right:585px;top:611px;font-size:10.7px;line-height:20px;color:#fff;transform:scaleX(0.9411);transform-origin:right center">1,00</div>
<div class="t" style="left:1492px;top:611px;font-size:11px;line-height:20px;color:#2aa7e8">$</div>
<div class="t" style="right:439px;top:611px;font-size:10.7px;line-height:20px;color:#f0883a">160,33</div>
<div class="t" style="right:346px;top:611px;font-size:10.7px;line-height:20px;color:#fff">21 705,45 $</div>
<div class="t" style="left:1730px;top:611px;font-size:11px;line-height:20px;color:#fff;transform:scaleX(1.0544);transform-origin:left center">unit</div>
<div class="t" style="left:1957px;top:611px;font-size:11px;line-height:20px;color:#fff">h</div>
<div class="cb" style="left:2038px;top:615px"></div>
<div class="cb" style="left:136px;top:635px"></div>
<div class="t" style="left:299px;top:631px;font-size:11.6px;font-weight:bold;line-height:20px;color:#fff;transform:scaleX(1.0070);transform-origin:left center">13 - Special Construction</div>
<svg style="left:974.5px;top:634.7px" width="13" height="14"><path d="M3.2,0.3 H9.8 V6.8 H12.8 L6.5,13.2 L0.2,6.8 H3.2 Z" fill="#0f1a26"/><path d="M6.5,1.6 V5.8 M4.4,3.7 H8.6" stroke="#fff" stroke-width="1.3"/></svg>
<div class="t" style="left:1290px;top:631px;font-size:11px;line-height:20px;color:#2aa7e8">$</div>
<div class="t" style="right:585px;top:631px;font-size:10.7px;line-height:20px;color:#fff;transform:scaleX(0.9411);transform-origin:right center">1,00</div>
<div class="t" style="left:1492px;top:631px;font-size:11px;line-height:20px;color:#2aa7e8">$</div>
<div class="t" style="right:346px;top:631px;font-size:10.7px;line-height:20px;color:#fff">527,00 $</div>
<div class="t" style="left:1730px;top:631px;font-size:11px;line-height:20px;color:#fff;transform:scaleX(1.0544);transform-origin:left center">unit</div>
<div class="cb" style="left:2038px;top:635px"></div>
<div class="cb" style="left:136px;top:655px"></div>
<div class="t" style="left:299px;top:651px;font-size:11.6px;font-weight:bold;line-height:20px;color:#fff;transform:scaleX(1.0114);transform-origin:left center">15.1 - Plumbing</div>
<svg style="left:974.5px;top:654.7px" width="13" height="14"><path d="M3.2,0.3 H9.8 V6.8 H12.8 L6.5,13.2 L0.2,6.8 H3.2 Z" fill="#0f1a26"/><path d="M6.5,1.6 V5.8 M4.4,3.7 H8.6" stroke="#fff" stroke-width="1.3"/></svg>
<div class="t" style="right:585px;top:651px;font-size:10.7px;line-height:20px;color:#fff;transform:scaleX(0.9411);transform-origin:right center">1,00</div>
<div class="t" style="left:1730px;top:651px;font-size:11px;line-height:20px;color:#fff;transform:scaleX(1.0544);transform-origin:left center">unit</div>
<div class="cb" style="left:2038px;top:655px"></div>
<div class="cb" style="left:136px;top:675px"></div>
<div class="t" style="left:299px;top:671px;font-size:11.6px;font-weight:bold;line-height:20px;color:#fff;transform:scaleX(1.0365);transform-origin:left center">15.2 - Ventilation (HVAC)</div>
<svg style="left:974.5px;top:674.7px" width="13" height="14"><path d="M3.2,0.3 H9.8 V6.8 H12.8 L6.5,13.2 L0.2,6.8 H3.2 Z" fill="#0f1a26"/><path d="M6.5,1.6 V5.8 M4.4,3.7 H8.6" stroke="#fff" stroke-width="1.3"/></svg>
<div class="t" style="right:585px;top:671px;font-size:10.7px;line-height:20px;color:#fff;transform:scaleX(0.9411);transform-origin:right center">1,00</div>
<div class="t" style="left:1730px;top:671px;font-size:11px;line-height:20px;color:#fff;transform:scaleX(1.0544);transform-origin:left center">unit</div>
<div class="cb" style="left:2038px;top:675px"></div>
<div class="cb" style="left:136px;top:695px"></div>
<div class="t" style="left:299px;top:691px;font-size:11.6px;font-weight:bold;line-height:20px;color:#fff;transform:scaleX(1.0386);transform-origin:left center">16 - Electricity</div>
<svg style="left:974.5px;top:694.7px" width="13" height="14"><path d="M3.2,0.3 H9.8 V6.8 H12.8 L6.5,13.2 L0.2,6.8 H3.2 Z" fill="#0f1a26"/><path d="M6.5,1.6 V5.8 M4.4,3.7 H8.6" stroke="#fff" stroke-width="1.3"/></svg>
<div class="t" style="right:585px;top:691px;font-size:10.7px;line-height:20px;color:#fff;transform:scaleX(0.9411);transform-origin:right center">1,00</div>
<div class="t" style="left:1730px;top:691px;font-size:11px;line-height:20px;color:#fff;transform:scaleX(1.0544);transform-origin:left center">unit</div>
<div class="cb" style="left:2038px;top:695px"></div>
<div class="t" style="left:1047px;top:454px;font-size:9.3px;line-height:20px;color:#111;transform:scaleX(0.9866);transform-origin:left center">SCUC</div>
<div class="t" style="left:1013px;top:471.5px;font-size:12.3px;font-weight:bold;line-height:20px;color:#000;transform:scaleX(1.0090);transform-origin:left center">19 000,00&nbsp; $/unit</div>
<div class="t" style="left:1328px;top:471.5px;font-size:11px;line-height:20px;color:#000;transform:scaleX(0.9952);transform-origin:left center">Standard price</div>
<div class="a" style="left:34px;top:349.5px;width:1.3px;height:16px;background:#000"></div>
<div class="a" style="left:34px;top:365px;width:9px;height:1.3px;background:#000"></div>
<div class="a" style="left:47px;top:370px;width:1.3px;height:332px;background:#000"></div>
<div class="a" style="left:47px;top:385.0px;width:9px;height:1.3px;background:#000"></div>
<div class="a" style="left:47px;top:405.0px;width:9px;height:1.3px;background:#000"></div>
<div class="a" style="left:47px;top:425.0px;width:9px;height:1.3px;background:#000"></div>
<div class="a" style="left:47px;top:541.0px;width:9px;height:1.3px;background:#000"></div>
<div class="a" style="left:47px;top:561.0px;width:9px;height:1.3px;background:#000"></div>
<div class="a" style="left:47px;top:581.0px;width:9px;height:1.3px;background:#000"></div>
<div class="a" style="left:47px;top:601.0px;width:9px;height:1.3px;background:#000"></div>
<div class="a" style="left:47px;top:621.0px;width:9px;height:1.3px;background:#000"></div>
<div class="a" style="left:47px;top:641.0px;width:9px;height:1.3px;background:#000"></div>
<div class="a" style="left:47px;top:661.0px;width:9px;height:1.3px;background:#000"></div>
<div class="a" style="left:47px;top:681.0px;width:9px;height:1.3px;background:#000"></div>
<div class="a" style="left:47px;top:701.0px;width:9px;height:1.3px;background:#000"></div>
<div class="a" style="left:60px;top:430px;width:1.3px;height:16px;background:#000"></div>
<div class="a" style="left:60px;top:445px;width:10px;height:1.3px;background:#000"></div>
<div class="a" style="left:73px;top:449.5px;width:1.3px;height:72px;background:#000"></div>
<div class="a" style="left:73px;top:462.5px;width:13px;height:1.3px;background:#000"></div>
<div class="a" style="left:73px;top:481.0px;width:13px;height:1.3px;background:#000"></div>
<div class="a" style="left:73px;top:500.5px;width:13px;height:1.3px;background:#000"></div>
<div class="a" style="left:73px;top:520.5px;width:13px;height:1.3px;background:#000"></div>
<div class="ex" style="left:30px;top:341.0px"></div><div class="a" style="left:32px;top:344.9px;width:5px;height:1.3px;background:#3a4aa0"></div>
<div class="ex" style="left:43px;top:361.0px"></div><div class="a" style="left:45px;top:364.9px;width:5px;height:1.3px;background:#3a4aa0"></div>
<div class="ex" style="left:56px;top:381.0px"></div><div class="a" style="left:58px;top:384.9px;width:5px;height:1.3px;background:#3a4aa0"></div><div class="a" style="left:59.9px;top:383.0px;width:1.3px;height:5px;background:#3a4aa0"></div>
<div class="ex" style="left:56px;top:401.0px"></div><div class="a" style="left:58px;top:404.9px;width:5px;height:1.3px;background:#3a4aa0"></div><div class="a" style="left:59.9px;top:403.0px;width:1.3px;height:5px;background:#3a4aa0"></div>
<div class="ex" style="left:56px;top:537.0px"></div><div class="a" style="left:58px;top:540.9px;width:5px;height:1.3px;background:#3a4aa0"></div><div class="a" style="left:59.9px;top:539.0px;width:1.3px;height:5px;background:#3a4aa0"></div>
<div class="ex" style="left:56px;top:557.0px"></div><div class="a" style="left:58px;top:560.9px;width:5px;height:1.3px;background:#3a4aa0"></div><div class="a" style="left:59.9px;top:559.0px;width:1.3px;height:5px;background:#3a4aa0"></div>
<div class="ex" style="left:56px;top:577.0px"></div><div class="a" style="left:58px;top:580.9px;width:5px;height:1.3px;background:#3a4aa0"></div><div class="a" style="left:59.9px;top:579.0px;width:1.3px;height:5px;background:#3a4aa0"></div>
<div class="ex" style="left:56px;top:597.0px"></div><div class="a" style="left:58px;top:600.9px;width:5px;height:1.3px;background:#3a4aa0"></div><div class="a" style="left:59.9px;top:599.0px;width:1.3px;height:5px;background:#3a4aa0"></div>
<div class="ex" style="left:56px;top:617.0px"></div><div class="a" style="left:58px;top:620.9px;width:5px;height:1.3px;background:#3a4aa0"></div><div class="a" style="left:59.9px;top:619.0px;width:1.3px;height:5px;background:#3a4aa0"></div>
<div class="ex" style="left:56px;top:637.0px"></div><div class="a" style="left:58px;top:640.9px;width:5px;height:1.3px;background:#3a4aa0"></div><div class="a" style="left:59.9px;top:639.0px;width:1.3px;height:5px;background:#3a4aa0"></div>
<div class="ex" style="left:56px;top:657.0px"></div><div class="a" style="left:58px;top:660.9px;width:5px;height:1.3px;background:#3a4aa0"></div><div class="a" style="left:59.9px;top:659.0px;width:1.3px;height:5px;background:#3a4aa0"></div>
<div class="ex" style="left:56px;top:677.0px"></div><div class="a" style="left:58px;top:680.9px;width:5px;height:1.3px;background:#3a4aa0"></div><div class="a" style="left:59.9px;top:679.0px;width:1.3px;height:5px;background:#3a4aa0"></div>
<div class="ex" style="left:56px;top:697.0px"></div><div class="a" style="left:58px;top:700.9px;width:5px;height:1.3px;background:#3a4aa0"></div><div class="a" style="left:59.9px;top:699.0px;width:1.3px;height:5px;background:#3a4aa0"></div>
<div class="ex" style="left:56px;top:421.0px"></div><div class="a" style="left:58px;top:424.9px;width:5px;height:1.3px;background:#3a4aa0"></div>
<div class="ex" style="left:69.5px;top:441.0px"></div><div class="a" style="left:71.5px;top:444.9px;width:5px;height:1.3px;background:#3a4aa0"></div>
<svg style="left:268px;top:473px" width="21" height="18" fill="#111">
<circle cx="7.5" cy="3" r="2.2" stroke="#d9dce5" stroke-width="0.8"/><path d="M4.5,5.6 H10 L12,9 L15.5,5.5 L16.5,6.3 L12.5,11 L10.5,9.5 V18 H8.5 V12.5 H7 V18 H5 V9.5 L3.5,11.5 L2.5,11 Z"/>
<path d="M0.5,12 H4.5 L4,17.5 H1 Z"/><rect x="11.5" y="15" width="8.5" height="3"/><rect x="15" y="12.5" width="3.5" height="2.5"/></svg>
<svg style="left:269.5px;top:494px" width="17" height="16" fill="#3c3c3c">
<circle cx="7.7" cy="1.7" r="1.6"/><path d="M5.5,3.8 H8.3 L9.5,8 L11.5,10 L10.8,10.7 L8.6,9 V10.5 L10,15.5 H8.7 L7,11 L4.5,15.5 H3.2 L5.8,10.2 V7.3 L3.5,9 L1.5,7.5 L2.2,6.8 L3.6,7.6 Z"/><path d="M9.5,15.5 L13,11 L16,15.5 Z"/></svg>
<svg style="left:266.5px;top:516.5px" width="24" height="14" fill="#0f202e">
<path d="M0.4,13.3 L1.6,8.6 L4.8,8.6 L6.8,13.3 Z"/><path d="M2.8,9.6 L6.4,1.4 L12.2,8.8" fill="none" stroke="#0f202e" stroke-width="2.2" stroke-linejoin="round"/><circle cx="6.4" cy="1.6" r="1.3"/>
<path d="M11.2,11.4 V5.2 L12.3,1.2 Q12.6,0.5 13.5,0.5 H17.6 V5.3 H21.3 Q22.5,5.3 22.5,6.8 V11.4 Z"/><path d="M13.3,5 L14,2 H16.3 V5 Z" fill="#d9dce5"/><rect x="9.4" y="11.7" width="13.2" height="1.7" rx="0.8"/></svg>
<div class="a" style="left:27px;top:775px;width:2034px;height:1.5px;background:#fff"></div>
<div class="a" style="left:28px;top:776px;width:2033px;height:15.5px;background:#cdcdcd"></div>
<div class="a" style="left:28px;top:776px;width:17px;height:15.5px;background:#f0f0f0"></div>
<div class="a" style="left:2032px;top:776px;width:29px;height:15.5px;background:#f0f0f0"></div>
<svg style="left:32.5px;top:779.5px" width="7" height="9"><path d="M5.5,0.8 L1.5,4.3 L5.5,7.8" fill="none" stroke="#505050" stroke-width="1.8"/></svg>
<svg style="left:2053px;top:779.5px" width="7" height="9"><path d="M1.2,0.8 L5.2,4.3 L1.2,7.8" fill="none" stroke="#505050" stroke-width="1.8"/></svg>
<div class="a" style="left:27px;top:791px;width:2034px;height:1.3px;background:#6a6a6a"></div>
<div class="a" style="left:30px;top:799px;width:2031px;height:16.6px;background:#9ab3d2"></div>
<div class="t" style="left:32px;top:800px;font-size:11px;line-height:14px;color:#111;transform:scaleX(1.0098);transform-origin:left center">Cost price</div>
<svg style="left:2049px;top:801.5px" width="10" height="12"><path d="M2.5,1 H7.5 V7 H2.5 Z" fill="none" stroke="#111" stroke-width="1.2"/><path d="M5.5,1.2 V6.5" stroke="#111" stroke-width="1.2"/><path d="M1,7.3 H9" stroke="#111" stroke-width="1.3"/><path d="M5,7.5 V11.5" stroke="#111" stroke-width="1.2"/></svg>
<div class="a" style="left:287px;top:816px;width:3px;height:352px;background:#9db5d4"></div>
<div class="t" style="left:40px;top:833px;font-size:11.2px;line-height:14px;color:#222;transform:scaleX(1.0254);transform-origin:left center">Type</div>
<div class="t" style="left:39px;top:854px;font-size:11.2px;line-height:14px;color:#222;transform:scaleX(1.0050);transform-origin:left center">Sorting Code</div>
<div class="t" style="left:39px;top:878.5px;font-size:11.2px;line-height:14px;color:#222;transform:scaleX(1.0158);transform-origin:left center">Code</div>
<div class="t" style="left:39px;top:905px;font-size:11.2px;line-height:14px;color:#222;transform:scaleX(0.9640);transform-origin:left center">Name</div>
<div class="t" style="left:39px;top:944px;font-size:11.2px;line-height:14px;color:#222;transform:scaleX(1.0188);transform-origin:left center">Specification</div>
<div class="t" style="left:39px;top:969px;font-size:11.2px;line-height:14px;color:#222;transform:scaleX(1.0622);transform-origin:left center">Identification</div>
<div class="t" style="left:39px;top:996px;font-size:11.2px;line-height:14px;color:#222;transform:scaleX(1.0309);transform-origin:left center">Item creator</div>
<div class="t" style="left:39px;top:1021px;font-size:11.2px;line-height:14px;color:#222;transform:scaleX(0.9858);transform-origin:left center">Status</div>
<div class="t" style="left:39px;top:1046px;font-size:11.2px;line-height:14px;color:#222;transform:scaleX(0.9927);transform-origin:left center">Classification</div>
<div class="a" style="left:127px;top:830px;width:101.5px;height:19px;background:#f0f0f0;border:1px solid #acacac"></div>
<div class="t" style="left:129px;top:832px;font-size:10.5px;line-height:14px;color:#111;transform:scaleX(1.0404);transform-origin:left center">Subcontract</div>
<div class="a" style="left:126px;top:854.5px;width:162px;height:18px;background:#fff;border:1px solid #acacac;border-right:none"></div>
<div class="t" style="left:128px;top:857px;font-size:11px;line-height:14px;color:#111;">04S</div>
<div class="a" style="left:126px;top:879.5px;width:162px;height:18px;background:#f0f0f0;border:1px solid #acacac;border-right:none"></div>
<div class="t" style="left:128px;top:882px;font-size:10.3px;line-height:14px;color:#111;transform:scaleX(0.9864);transform-origin:left center">CBEST-102419</div>
<div class="a" style="left:125px;top:905px;width:144px;height:32px;background:#f0f0f0;border:1px solid #a9b6c6"></div>
<div class="t" style="left:127px;top:906.5px;font-size:10.5px;line-height:14px;color:#111;transform:scaleX(1.0348);transform-origin:left center">SUB - Mansonry ($) GLOBAL</div>
<div class="a" style="left:125px;top:944px;width:99.5px;height:19px;background:#f0f0f0;border:1px solid #acb4be"></div>
<div class="a" style="left:230px;top:943.5px;width:20px;height:19.5px;background:#f0f0f0;border:1px solid #adadad;border-right-color:#7a7a7a;border-bottom-color:#7a7a7a"></div>
<div class="a" style="left:230px;top:943.5px;width:20px;height:19.5px;text-align:center;font-size:11px;line-height:19.5px;color:#111">...</div>
<div class="a" style="left:252px;top:943.5px;width:19.5px;height:19.5px;background:#f0f0f0;border:1px solid #adadad;border-right-color:#7a7a7a;border-bottom-color:#7a7a7a"></div>
<div class="a" style="left:252px;top:943.5px;width:19.5px;height:19.5px;text-align:center;font-size:11px;line-height:19.5px;color:#111">X</div>
<div class="a" style="left:125px;top:969px;width:81px;height:18.5px;background:#f0f0f0;border:1px solid #a9b6c6"></div>
<div class="t" style="left:127px;top:971px;font-size:10.5px;line-height:14px;color:#111;transform:scaleX(0.9887);transform-origin:left center">Masonry Global</div>
<div class="a" style="left:125px;top:994px;width:144px;height:18.5px;background:#f0f0f0;border:1px solid #acacac"></div>
<div class="t" style="left:127px;top:996px;font-size:10.5px;line-height:14px;color:#111;transform:scaleX(1.0112);transform-origin:left center">Martial Nadeau</div>
<div class="t" style="left:277px;top:996.5px;font-size:11.2px;line-height:14px;color:#111;">As</div>
<div class="a" style="left:125px;top:1020px;width:144px;height:18.5px;background:#f0f0f0;border:1px solid #acacac"></div>
<div class="t" style="left:127px;top:1022px;font-size:10.5px;line-height:14px;color:#111;transform:scaleX(1.0279);transform-origin:left center">Verified</div>
<div class="a" style="left:125px;top:1044px;width:125px;height:47.5px;background:#fff;border:1px solid #acacac"></div>
<div class="a" style="left:250px;top:1044px;width:20px;height:19.5px;background:#f0f0f0;border:1px solid #adadad;border-right-color:#7a7a7a;border-bottom-color:#7a7a7a"></div>
<div class="a" style="left:250px;top:1044px;width:20px;height:19.5px;text-align:center;font-size:11px;line-height:19.5px;color:#111">...</div>
<div class="a" style="left:250px;top:1064px;width:20px;height:19.5px;background:#f0f0f0;border:1px solid #adadad;border-right-color:#7a7a7a;border-bottom-color:#7a7a7a"></div>
<div class="a" style="left:250px;top:1064px;width:20px;height:19.5px;text-align:center;font-size:11px;line-height:19.5px;color:#111">X</div>
<div class="a" style="left:298.5px;top:854px;width:1758px;height:306px;border:1px solid #dadada;border-right:2px solid #9a9a9a;border-bottom:2px solid #8a8a8a;background:#fff"></div>
<div class="a" style="left:303.5px;top:833.5px;width:106.3px;height:21px;background:#fff;border:1px solid #dcdcdc;border-bottom:none;border-right:2px solid #a8a8a8"></div>
<div class="a" style="left:303.5px;top:833.5px;width:106.3px;height:21px;text-align:center;font-size:11.5px;line-height:21px;color:#6e6e6e;white-space:nowrap">Material / Supplier</div>
<div class="a" style="left:409.8px;top:833.5px;width:45.5px;height:21px;background:#fff;border:1px solid #dcdcdc;border-bottom:none;border-right:2px solid #a8a8a8"></div>
<div class="a" style="left:409.8px;top:833.5px;width:45.5px;height:21px;text-align:center;font-size:11.5px;line-height:21px;color:#6e6e6e;white-space:nowrap">Labor</div>
<div class="a" style="left:455.3px;top:833.5px;width:69.2px;height:21px;background:#fff;border:1px solid #dcdcdc;border-bottom:none;border-right:2px solid #a8a8a8"></div>
<div class="a" style="left:455.3px;top:833.5px;width:69.2px;height:21px;text-align:center;font-size:11.5px;line-height:21px;color:#6e6e6e;white-space:nowrap">Equipment</div>
<div class="a" style="left:658.1px;top:833.5px;width:72.9px;height:21px;background:#fff;border:1px solid #dcdcdc;border-bottom:none;border-right:2px solid #a8a8a8"></div>
<div class="a" style="left:658.1px;top:833.5px;width:72.9px;height:21px;text-align:center;font-size:11.5px;line-height:21px;color:#6e6e6e;white-space:nowrap">Other costs</div>
<div class="a" style="left:524.5px;top:831px;width:134px;height:24px;background:#fff;border:1px solid #dcdcdc;border-bottom:none;border-right:2px solid #9a9a9a"></div>
<div class="a" style="left:524.5px;top:831px;width:134px;height:21px;text-align:center;font-size:11.5px;line-height:21px;color:#333;white-space:nowrap">SubContract / Flat rate</div>
<div class="a" style="left:308px;top:868px;width:649px;height:35px;background:#fff;border:1px solid #e4e4e4;border-top:2px solid #9a9a9a;border-left:1px solid #b0b0b0"></div>
<svg style="left:318px;top:878.5px" width="16" height="16" fill="#111"><rect x="6.3" y="0" width="3.2" height="15.5"/><rect x="0" y="6.2" width="15.5" height="3.2"/></svg>
<svg style="left:349px;top:876.5px" width="19" height="19" fill="#6f6f6f"><rect x="1" y="3" width="16.5" height="2.2"/><rect x="6" y="0.5" width="6.5" height="3"/><path d="M2.5,5.5 H16 L15,18.5 H3.5 Z"/><g stroke="#fff" stroke-width="1"><path d="M6,8V16M9.25,8V16M12.5,8V16"/></g></svg>
<svg style="left:386px;top:877px" width="15" height="18" fill="none" stroke="#111" stroke-width="1.7"><path d="M7.3,1.5V17.5M1.3,7.5L7.3,1.5L13.3,7.5"/></svg>
<svg style="left:418.5px;top:877px" width="15" height="18" fill="none" stroke="#111" stroke-width="1.7"><path d="M7.3,0.5V16.5M1.3,10.5L7.3,16.5L13.3,10.5"/></svg>
<div class="a" style="left:458.5px;top:876px;width:1px;height:19px;background:#c8c8c8"></div>
<div class="a" style="left:474px;top:876px;width:1px;height:19px;background:#c8c8c8"></div>
<div class="t" style="left:459px;top:875px;font-size:19px;font-weight:bold;line-height:21px;color:#0f1e2b">$</div>
<div class="a" style="left:308px;top:905px;width:649px;height:245px;background:#ababab"></div>
<div class="a" style="left:308px;top:905px;width:624px;height:20px;background:#212936"></div>
<div class="a" style="left:308px;top:905px;width:20.5px;height:20px;text-align:center;font-size:11.5px;font-weight:bold;line-height:20px;color:#fff;white-space:nowrap;overflow:hidden"></div>
<div class="a" style="left:328.0px;top:905px;width:1.2px;height:20px;background:#dfe2e6"></div>
<div class="a" style="left:328.5px;top:905px;width:48.5px;height:20px;text-align:center;font-size:11.5px;font-weight:bold;line-height:20px;color:#fff;white-space:nowrap;overflow:hidden">Choice</div>
<div class="a" style="left:376.5px;top:905px;width:1.2px;height:20px;background:#dfe2e6"></div>
<div class="a" style="left:377px;top:905px;width:52.4px;height:20px;text-align:center;font-size:11.5px;font-weight:bold;line-height:20px;color:#fff;white-space:nowrap;overflow:hidden">Project</div>
<div class="a" style="left:428.9px;top:905px;width:1.2px;height:20px;background:#dfe2e6"></div>
<div class="a" style="left:429.4px;top:905px;width:92.0px;height:20px;text-align:center;font-size:11.5px;font-weight:bold;line-height:20px;color:#fff;white-space:nowrap;overflow:hidden">Subcontractor</div>
<div class="a" style="left:520.9px;top:905px;width:1.2px;height:20px;background:#dfe2e6"></div>
<div class="a" style="left:521.4px;top:905px;width:38.2px;height:20px;text-align:center;font-size:11.5px;font-weight:bold;line-height:20px;color:#fff;white-space:nowrap;overflow:hidden">Type</div>
<div class="a" style="left:559.1px;top:905px;width:1.2px;height:20px;background:#dfe2e6"></div>
<div class="a" style="left:559.6px;top:905px;width:38.0px;height:20px;text-align:center;font-size:11.5px;font-weight:bold;line-height:20px;color:#fff;white-space:nowrap;overflow:hidden">Note</div>
<div class="a" style="left:597.1px;top:905px;width:1.2px;height:20px;background:#dfe2e6"></div>
<div class="a" style="left:597.6px;top:905px;width:99.9px;height:20px;text-align:center;font-size:11.5px;font-weight:bold;line-height:20px;color:#fff;white-space:nowrap;overflow:hidden">Price</div>
<div class="a" style="left:697.0px;top:905px;width:1.2px;height:20px;background:#dfe2e6"></div>
<div class="a" style="left:697.5px;top:905px;width:34.5px;height:20px;text-align:center;font-size:11.5px;font-weight:bold;line-height:20px;color:#fff;white-space:nowrap;overflow:hidden">Unit</div>
<div class="a" style="left:731.5px;top:905px;width:1.2px;height:20px;background:#dfe2e6"></div>
<div class="a" style="left:732px;top:905px;width:62.0px;height:20px;text-align:center;font-size:11.5px;font-weight:bold;line-height:20px;color:#fff;white-space:nowrap;overflow:hidden">Constant</div>
<div class="a" style="left:793.5px;top:905px;width:1.2px;height:20px;background:#dfe2e6"></div>
<div class="a" style="left:794px;top:905px;width:62.0px;height:20px;text-align:center;font-size:11.5px;font-weight:bold;line-height:20px;color:#fff;white-space:nowrap;overflow:hidden">Included</div>
<div class="a" style="left:855.5px;top:905px;width:1.2px;height:20px;background:#dfe2e6"></div>
<div class="a" style="left:856px;top:905px;width:76.0px;height:20px;text-align:center;font-size:11.5px;font-weight:bold;line-height:20px;color:#fff;white-space:nowrap;overflow:hidden"><u>Update date</u></div>
<div class="a" style="left:308px;top:925px;width:624px;height:80px;background:#fff"></div>
<div class="a" style="left:328.5px;top:925px;width:603.5px;height:20px;background:#def3f2"></div>
<div class="a" style="left:308px;top:925px;width:20.5px;height:20px;background:#efefef;border-bottom:1px solid #d8d8d8;border-right:1px solid #cfcfcf"></div>
<div class="a" style="left:308px;top:945px;width:20.5px;height:19px;background:#efefef;border-bottom:1px solid #d8d8d8;border-right:1px solid #cfcfcf"></div>
<div class="a" style="left:308px;top:964px;width:20.5px;height:20.5px;background:#efefef;border-bottom:1px solid #d8d8d8;border-right:1px solid #cfcfcf"></div>
<div class="a" style="left:308px;top:984.5px;width:20.5px;height:20.0px;background:#efefef;border-bottom:1px solid #d8d8d8;border-right:1px solid #cfcfcf"></div>
<div class="a" style="left:328.5px;top:984.0px;width:603.5px;height:1px;background:#ececec"></div>
<div class="a" style="left:376.5px;top:964px;width:1px;height:40.5px;background:#ececec"></div>
<div class="a" style="left:428.9px;top:964px;width:1px;height:40.5px;background:#ececec"></div>
<div class="a" style="left:520.9px;top:964px;width:1px;height:40.5px;background:#ececec"></div>
<div class="a" style="left:559.1px;top:964px;width:1px;height:40.5px;background:#ececec"></div>
<div class="a" style="left:597.1px;top:964px;width:1px;height:40.5px;background:#ececec"></div>
<div class="a" style="left:697.0px;top:964px;width:1px;height:40.5px;background:#ececec"></div>
<div class="a" style="left:793.5px;top:964px;width:1px;height:40.5px;background:#ececec"></div>
<div class="a" style="left:855.5px;top:964px;width:1px;height:40.5px;background:#ececec"></div>
<div class="a" style="left:308px;top:945px;width:624px;height:2.5px;background:#000"></div>
<div class="a" style="left:308px;top:962px;width:624px;height:2.5px;background:#000"></div>
<div class="a" style="left:308px;top:1004.5px;width:624px;height:1.6px;background:#8a8a8a"></div>
<div class="a" style="left:346px;top:928px;width:13px;height:13px;border:1px solid #8a8a8a;background:#fff"></div>
<div class="a" style="left:348.5px;top:930.5px;width:8px;height:8px;background:linear-gradient(135deg,#6cc3ee,#1a6fb0);border:0.5px solid #1b4f80"></div>
<div class="a" style="left:397.5px;top:928px;width:13px;height:13px;border:1px solid #8a8a8a;background:#fff"></div>
<div class="a" style="left:400.0px;top:930.5px;width:8px;height:8px;background:linear-gradient(135deg,#6cc3ee,#1a6fb0);border:0.5px solid #1b4f80"></div>
<div class="a" style="left:757px;top:928px;width:13px;height:13px;border:1px solid #8a8a8a;background:#fff"></div>
<div class="a" style="left:759.5px;top:930.5px;width:8px;height:8px;background:linear-gradient(135deg,#6cc3ee,#1a6fb0);border:0.5px solid #1b4f80"></div>
<div class="a" style="left:819px;top:928px;width:13px;height:13px;border:1px solid #8a8a8a;background:#fff"></div>
<div class="a" style="left:821.5px;top:930.5px;width:8px;height:8px;background:linear-gradient(135deg,#6cc3ee,#1a6fb0);border:0.5px solid #1b4f80"></div>
<div class="a" style="left:430px;top:947.5px;width:91.5px;height:14.5px;background:#d6d6d6"></div>
<div class="t" style="left:433px;top:948px;font-size:11.3px;line-height:14px;color:#8a8a8a;transform:scaleX(0.9932);transform-origin:left center">Standard price</div>
<div class="cb" style="left:346.5px;top:948.5px;width:13px;height:12.5px"></div><svg style="left:348.0px;top:949.5px" width="11" height="11"><path d="M1.8,5.6 L4.3,8.9 L9.2,1.6" fill="none" stroke="#3a4ea8" stroke-width="1.8" stroke-linecap="round" stroke-linejoin="round"/></svg>
<div class="cb" style="left:397.5px;top:948.5px;width:13px;height:12.5px"></div>
<div class="t" style="right:1374.5px;top:947.5px;font-size:11.3px;line-height:14px;color:#111;transform:scaleX(0.9465);transform-origin:right center">19 000,00 $</div>
<div class="t" style="left:701px;top:947.5px;font-size:11.3px;line-height:14px;color:#111;transform:scaleX(1.0264);transform-origin:left center">unit</div>
<div class="cb" style="left:757px;top:948.5px;width:13px;height:12.5px"></div>
<div class="cb" style="left:819px;top:948.5px;width:13px;height:12.5px"></div>
<div class="a" style="left:857px;top:947.5px;width:74.5px;height:16px;background:#d6d6d6"></div>
<div class="t" style="left:860px;top:947.5px;font-size:11.3px;line-height:14px;color:#8d8d8d;transform:scaleX(0.9722);transform-origin:left center">2022-01-14</div>
<div class="cb" style="left:346.5px;top:967.5px;width:13px;height:12.5px"></div>
<div class="cb" style="left:397.5px;top:967.5px;width:13px;height:12.5px"></div><svg style="left:399.0px;top:968.5px" width="11" height="11"><path d="M1.8,5.6 L4.3,8.9 L9.2,1.6" fill="none" stroke="#3a4ea8" stroke-width="1.8" stroke-linecap="round" stroke-linejoin="round"/></svg>
<div class="t" style="left:433px;top:966.5px;font-size:11.3px;line-height:14px;color:#111;transform:scaleX(1.0001);transform-origin:left center">A &amp; A Masonry</div>
<div class="t" style="right:1374.5px;top:966.5px;font-size:11.3px;line-height:14px;color:#111;transform:scaleX(0.9666);transform-origin:right center">22 500,00 $</div>
<div class="t" style="left:701px;top:966.5px;font-size:11.3px;line-height:14px;color:#111;transform:scaleX(1.0264);transform-origin:left center">unit</div>
<div class="cb" style="left:757px;top:967.5px;width:13px;height:12.5px"></div>
<div class="cb" style="left:819px;top:967.5px;width:13px;height:12.5px"></div>
<div class="a" style="left:857px;top:966.0px;width:74.5px;height:19px;background:#d6d6d6"></div>
<div class="t" style="left:860px;top:966.5px;font-size:11.3px;line-height:14px;color:#8d8d8d;transform:scaleX(0.9722);transform-origin:left center">2022-01-14</div>
<div class="cb" style="left:346.5px;top:987.5px;width:13px;height:12.5px"></div>
<div class="cb" style="left:397.5px;top:987.5px;width:13px;height:12.5px"></div><svg style="left:399.0px;top:988.5px" width="11" height="11"><path d="M1.8,5.6 L4.3,8.9 L9.2,1.6" fill="none" stroke="#3a4ea8" stroke-width="1.8" stroke-linecap="round" stroke-linejoin="round"/></svg>
<div class="t" style="left:433px;top:986.5px;font-size:11.3px;line-height:14px;color:#111;transform:scaleX(0.9673);transform-origin:left center">B &amp; C Masonry</div>
<div class="t" style="right:1374.5px;top:986.5px;font-size:11.3px;line-height:14px;color:#111;transform:scaleX(0.9548);transform-origin:right center">18 000,00 $</div>
<div class="t" style="left:701px;top:986.5px;font-size:11.3px;line-height:14px;color:#111;transform:scaleX(1.0264);transform-origin:left center">unit</div>
<div class="cb" style="left:757px;top:987.5px;width:13px;height:12.5px"></div>
<div class="cb" style="left:819px;top:987.5px;width:13px;height:12.5px"></div>
<div class="a" style="left:857px;top:986.0px;width:74.5px;height:19px;background:#d6d6d6"></div>
<div class="t" style="left:860px;top:986.5px;font-size:11.3px;line-height:14px;color:#8d8d8d;transform:scaleX(0.9722);transform-origin:left center">2022-01-14</div>
<svg style="left:898px;top:984px" width="14" height="22"><path d="M1,1 V17 L4.8,13.3 L7.6,19.6 L10,18.6 L7.3,12.4 H12.4 Z" fill="#fff" stroke="#000" stroke-width="1"/></svg>
<div class="a" style="left:957px;top:905px;width:4px;height:245px;background:#a9bcd4"></div>
<div class="t" style="left:966px;top:879px;font-size:11.3px;line-height:14px;color:#222;transform:scaleX(1.0105);transform-origin:left center">Note on the supplier's price : Standard price</div>
<div class="a" style="left:961px;top:905px;width:1092px;height:245.5px;background:#fff;border:1px solid #a8a8a8;border-right-color:#dcdcdc;border-bottom-color:#dcdcdc"></div>
<div class="a" style="left:308px;top:1150px;width:1745px;height:1px;background:#a8a8a8"></div>
<div class="a" style="left:27px;top:1168px;width:2034px;height:1.3px;background:#111"></div>
<div class="t" style="left:39.6px;top:1173px;font-size:11.2px;line-height:14px;color:#222;transform:scaleX(1.0258);transform-origin:left center">Descriptions / Notes</div>
<div class="t" style="left:157px;top:1173px;font-size:11.2px;line-height:14px;color:#222;transform:scaleX(1.0156);transform-origin:left center">Settings</div>
<div class="t" style="left:214px;top:1173px;font-size:11.2px;line-height:14px;color:#222;transform:scaleX(0.9917);transform-origin:left center">Cost price</div>
<div class="t" style="left:279.7px;top:1173px;font-size:11.2px;line-height:14px;color:#222;transform:scaleX(1.0334);transform-origin:left center">Error / Improvements</div>
<div class="t" style="left:405px;top:1173px;font-size:11.2px;line-height:14px;color:#222;transform:scaleX(0.9579);transform-origin:left center">Summary</div>
<div class="t" style="left:469.2px;top:1173px;font-size:11.2px;line-height:14px;color:#222;transform:scaleX(1.0100);transform-origin:left center">Usage</div>
<div class="a" style="left:148.7px;top:1171px;width:1.2px;height:19px;background:#4a4a4a"></div>
<div class="a" style="left:205.6px;top:1171px;width:1.2px;height:19px;background:#4a4a4a"></div>
<div class="a" style="left:271.7px;top:1171px;width:1.2px;height:19px;background:#4a4a4a"></div>
<div class="a" style="left:396.5px;top:1171px;width:1.2px;height:19px;background:#4a4a4a"></div>
<div class="a" style="left:460.7px;top:1171px;width:1.2px;height:19px;background:#4a4a4a"></div>
<div class="a" style="left:507.3px;top:1171px;width:1.2px;height:19px;background:#4a4a4a"></div>
<div class="a" style="left:211.8px;top:1171.8px;width:54.5px;height:16.5px;border:1px dotted #333"></div>
<div class="a" style="left:5px;top:1193px;width:2056px;height:44px;background:#f0f0f0"></div>
<div class="a" style="left:5px;top:1194px;width:197px;height:22px;border:1px solid #fff;border-top-color:#a0a0a0;border-left-color:#a0a0a0"></div>
<div class="a" style="left:205px;top:1194px;width:172px;height:22px;border:1px solid #fff;border-top-color:#a0a0a0;border-left-color:#a0a0a0"></div>
<div class="a" style="left:380px;top:1194.5px;width:1669px;height:21.5px;border:1px solid #fff;border-top-color:#a0a0a0;border-left-color:#a0a0a0"></div>
<div class="t" style="left:5.5px;top:1199px;font-size:10.7px;line-height:14px;color:#111;transform:scaleX(0.9774);transform-origin:left center">102419</div>
<div class="t" style="left:207.5px;top:1199px;font-size:10.7px;line-height:14px;color:#111;transform:scaleX(0.9675);transform-origin:left center">237 Records</div>
<div class="t" style="left:382px;top:1199px;font-size:10.7px;line-height:14px;color:#111;transform:scaleX(1.0003);transform-origin:left center">[Type: Subcontract], [Name: SUB - Mansonry ($) GLOBAL]</div>
<svg style="left:2047px;top:1203px" width="12" height="12"><path d="M11,3 L3,11 M11,7 L7,11" stroke="#9a9a9a" stroke-width="1"/></svg>
<div class="a" style="left:5px;top:1216px;width:2056px;height:20px;overflow:hidden"><div class="t" style="left:2px;top:10px;font-size:11.2px;line-height:14px;color:#333">expertisa</div><div class="t" style="left:59px;top:10px;font-size:11.2px;line-height:14px;color:#333">BCC Officielle</div><div class="a" style="left:131.5px;top:10px;width:1px;height:12px;background:#c0c0c0"></div><div class="t" style="left:139px;top:10px;font-size:11.2px;line-height:14px;color:#333">Alain</div></div>
<svg style="left:0;top:0;filter:drop-shadow(2px 3px 2px rgba(0,0,0,0.3))" width="2070" height="1246"><path d="M27,459 L51.5,435.7" stroke="#8a0a0a" stroke-width="2.3"/><path d="M58,429.5 L54.9,439.3 L48.0,432.1 Z" fill="#8a0a0a"/></svg>
<svg style="left:0;top:0;filter:drop-shadow(2px 3px 2px rgba(0,0,0,0.3))" width="2070" height="1246"><path d="M31,464 L60.6,452.7" stroke="#8a0a0a" stroke-width="2.3"/><path d="M69,449.5 L62.4,457.4 L58.8,448.0 Z" fill="#8a0a0a"/></svg>
<svg style="left:0px;top:451.5px;filter:drop-shadow(2px 3px 2px rgba(0,0,0,0.3))" width="36" height="36"><circle cx="18" cy="18" r="15" fill="#8a0a0a"/><path d="M19.6,12.2 V23.7" stroke="#fff" stroke-width="2.2"/><path d="M20.5,11.8 L15.4,14.7" stroke="#fff" stroke-width="1.6"/></svg>
<svg style="left:0;top:0;filter:drop-shadow(2px 3px 2px rgba(0,0,0,0.3))" width="2070" height="1246"><path d="M958,457 L1003.8,477.3" stroke="#8a0a0a" stroke-width="2.3"/><path d="M1012,481 L1001.9,481.5 L1005.6,473.2 Z" fill="#8a0a0a"/></svg>
<svg style="left:934.5px;top:436.5px;filter:drop-shadow(2px 3px 2px rgba(0,0,0,0.3))" width="35.0" height="35.0"><circle cx="17.5" cy="17.5" r="14.5" fill="#8a0a0a"/><text x="17.5" y="22.8" text-anchor="middle" font-family="Liberation Sans" font-size="15" fill="#fff">2</text></svg>
<svg style="left:0;top:0;filter:drop-shadow(2px 3px 2px rgba(0,0,0,0.3))" width="2070" height="1246"><path d="M513,826 L351.6,875.4" stroke="#8a0a0a" stroke-width="2.3"/><path d="M343,878 L350.3,871.1 L352.9,879.7 Z" fill="#8a0a0a"/></svg>
<svg style="left:0;top:0;filter:drop-shadow(2px 3px 2px rgba(0,0,0,0.3))" width="2070" height="1246"><path d="M535,832 L622.0,929.3" stroke="#8a0a0a" stroke-width="2.3"/><path d="M628,936 L618.6,932.3 L625.4,926.3 Z" fill="#8a0a0a"/></svg>
<svg style="left:507.6px;top:804.4px;filter:drop-shadow(2px 3px 2px rgba(0,0,0,0.3))" width="35.2" height="35.2"><circle cx="17.6" cy="17.6" r="14.6" fill="#8a0a0a"/><text x="17.6" y="22.900000000000002" text-anchor="middle" font-family="Liberation Sans" font-size="15" fill="#fff">3</text></svg>
<svg style="left:0;top:0;filter:drop-shadow(2px 3px 2px rgba(0,0,0,0.3))" width="2070" height="1246"><path d="M316,1021 L342.1,967.1" stroke="#8a0a0a" stroke-width="2.3"/><path d="M346,959 L346.1,969.1 L338.0,965.1 Z" fill="#8a0a0a"/></svg>
<svg style="left:290.7px;top:1016.7px;filter:drop-shadow(2px 3px 2px rgba(0,0,0,0.3))" width="36" height="36"><circle cx="18" cy="18" r="15" fill="#8a0a0a"/><text x="18" y="23.3" text-anchor="middle" font-family="Liberation Sans" font-size="15" fill="#fff">4</text></svg>
<svg style="left:0;top:0;filter:drop-shadow(2px 3px 2px rgba(0,0,0,0.3))" width="2070" height="1246" fill="none" stroke="#8a0a0a" stroke-width="2.8"><rect x="628.8" y="937" width="101" height="78"/><ellipse cx="322.5" cy="886.6" rx="19" ry="15.6"/><ellipse cx="241.3" cy="1177" rx="36" ry="20.5"/><ellipse cx="2049" cy="806" rx="11.5" ry="15"/></svg>

</body></html>
